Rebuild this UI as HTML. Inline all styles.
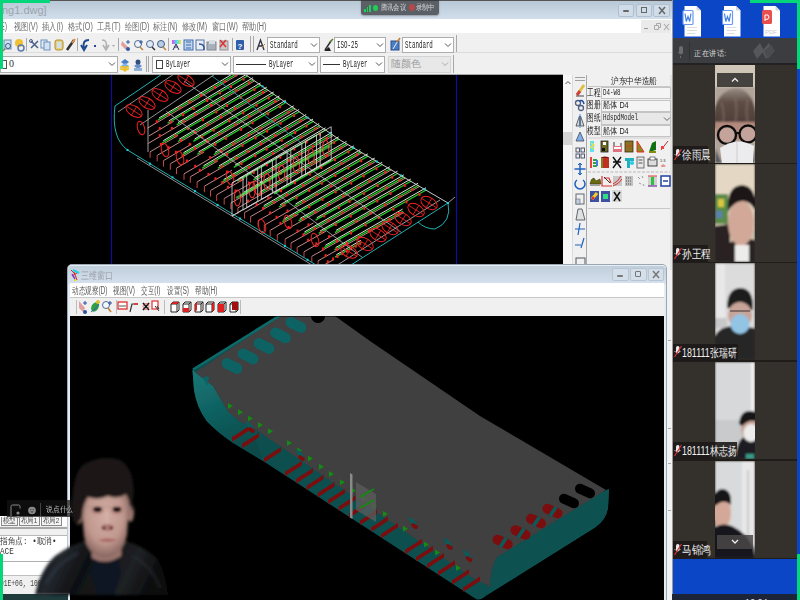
<!DOCTYPE html>
<html><head><meta charset="utf-8">
<style>
*{margin:0;padding:0;box-sizing:border-box}
html,body{width:800px;height:600px;overflow:hidden;background:#000;font-family:"Liberation Sans",sans-serif}
.a{position:absolute}
.t{position:absolute;white-space:nowrap;line-height:1}
</style></head><body>
<!-- CAD window -->
<div class="a" style="left:0;top:0;width:673px;height:20px;background:linear-gradient(#b9c8d6,#d3e0ec);border-top:1px solid #555"></div>
<div class="t" style="left:2px;top:5px;font-size:11px;color:#9aa3ad">ng1.dwg]</div>
<div class="a" style="left:0;top:19px;width:673px;height:14px;background:#fff"></div>
<div class="a" style="left:0;top:33px;width:673px;height:42px;background:#f0f0f0"></div>

<!-- menubar -->
<div class="t" style="left:0px;top:22px;font-size:10px;color:#6c6c6c;transform:scaleX(.72);transform-origin:0 0">E)</div>
<div class="t" style="left:14px;top:22px;font-size:10px;color:#6c6c6c;transform:scaleX(.72);transform-origin:0 0">视图(V)</div>
<div class="t" style="left:42px;top:22px;font-size:10px;color:#6c6c6c;transform:scaleX(.72);transform-origin:0 0">插入(I)</div>
<div class="t" style="left:68px;top:22px;font-size:10px;color:#6c6c6c;transform:scaleX(.72);transform-origin:0 0">格式(O)</div>
<div class="t" style="left:97px;top:22px;font-size:10px;color:#6c6c6c;transform:scaleX(.72);transform-origin:0 0">工具(T)</div>
<div class="t" style="left:125px;top:22px;font-size:10px;color:#6c6c6c;transform:scaleX(.72);transform-origin:0 0">绘图(D)</div>
<div class="t" style="left:153px;top:22px;font-size:10px;color:#6c6c6c;transform:scaleX(.72);transform-origin:0 0">标注(N)</div>
<div class="t" style="left:182px;top:22px;font-size:10px;color:#6c6c6c;transform:scaleX(.72);transform-origin:0 0">修改(M)</div>
<div class="t" style="left:212px;top:22px;font-size:10px;color:#6c6c6c;transform:scaleX(.72);transform-origin:0 0">窗口(W)</div>
<div class="t" style="left:242px;top:22px;font-size:10px;color:#6c6c6c;transform:scaleX(.72);transform-origin:0 0">帮助(H)</div>
<div class="a" style="left:641px;top:20px;width:10px;height:13px;background:#eaeaea"></div>
<div class="a" style="left:651px;top:20px;width:10px;height:13px;background:#eaeaea"></div>
<div class="a" style="left:661px;top:20px;width:10px;height:13px;background:#eaeaea"></div>
<div class="a" style="left:644px;top:28px;width:4px;height:1px;background:#999"></div>
<svg class="a" style="left:653px;top:22px" width="8" height="9"><path d="M1.5 3.5 h4 v4 h-4z M3.5 3.5 v-2 h4 v4 h-2" stroke="#aaa" fill="none"/></svg>
<svg class="a" style="left:663px;top:23px" width="7" height="8"><path d="M1 1 L6 7 M6 1 L1 7" stroke="#aaa" stroke-width="1.1"/></svg>
<!-- window buttons -->
<div class="a" style="left:618px;top:4px;width:16px;height:13px;border:1px solid #b0c0d0;border-radius:2px;background:#d0dce8"></div>
<div class="a" style="left:636px;top:4px;width:16px;height:13px;border:1px solid #b0c0d0;border-radius:2px;background:#d0dce8"></div>
<div class="a" style="left:653px;top:4px;width:17px;height:13px;border:1px solid #b0c0d0;border-radius:2px;background:#d0dce8"></div>
<div class="a" style="left:623px;top:10px;width:6px;height:2px;background:#666;border-radius:1px"></div>
<div class="a" style="left:641px;top:7px;width:6px;height:6px;border:1px solid #666"></div>
<svg class="a" style="left:658px;top:6px" width="8" height="9"><path d="M1 1 L7 8 M7 1 L1 8" stroke="#6a6a6a" stroke-width="1.6"/></svg>
<!-- toolbar1 -->
<div class="a" style="left:0;top:52px;width:673px;height:1px;background:#dcdcdc"></div>
<div class="a" style="left:0;top:74px;width:563px;height:1px;background:#a8a8a8"></div>
<svg class="a" style="left:0;top:33px" width="460" height="42" viewBox="0 33 460 42">
<g stroke="#a8a8a8" stroke-width="1">
<line x1="26.5" y1="38" x2="26.5" y2="51"/><line x1="77.5" y1="38" x2="77.5" y2="51"/><line x1="118.5" y1="38" x2="118.5" y2="51"/>
<line x1="168.5" y1="38" x2="168.5" y2="51"/><line x1="232.5" y1="38" x2="232.5" y2="51"/><line x1="250.5" y1="36" x2="250.5" y2="52"/><line x1="253.5" y1="36" x2="253.5" y2="52"/>
<line x1="146.5" y1="56" x2="146.5" y2="72"/><line x1="148.5" y1="56" x2="148.5" y2="72"/>
<line x1="456.5" y1="35" x2="456.5" y2="52"/><line x1="453.5" y1="55" x2="453.5" y2="73"/>
</g>
<!-- icons row 1 -->
<rect x="4" y="40" width="7" height="9" fill="#cfe0f0" stroke="#6f8db0"/><circle cx="8" cy="46" r="2.5" fill="none" stroke="#3a5f8a"/><line x1="5" y1="49" x2="3" y2="51" stroke="#b07040" stroke-width="1.5"/>
<circle cx="19" cy="43" r="4" fill="#f0c030"/><circle cx="21" cy="48" r="3" fill="none" stroke="#5a78b0" stroke-width="1.5"/>
<path d="M31 41 L38 48 M31 48 L38 41" stroke="#4a5f8a" stroke-width="1.5"/><circle cx="31" cy="41" r="1.5" fill="none" stroke="#4a5f8a"/>
<rect x="41" y="40" width="6" height="8" fill="#e0ecf8" stroke="#7090b8"/><rect x="44" y="42" width="6" height="8" fill="#d0e2f4" stroke="#7090b8"/>
<rect x="55" y="40" width="8" height="10" rx="2" fill="#e8d080" stroke="#b09030"/><rect x="57" y="42" width="4" height="6" fill="#cfe0f0"/>
<path d="M67 50 L74 40" stroke="#303030" stroke-width="2.5"/><path d="M72 43 L75 39" stroke="#e09040" stroke-width="2"/>
<path d="M89 40 Q82 40 84 48 M81 45 L84 50 L87 45" stroke="#1f4a8f" stroke-width="2" fill="none"/>
<rect x="94" y="45" width="2" height="2" fill="#3040a0"/>
<path d="M102 40 Q108 40 106 48 M103 45 L106 50 L109 45" stroke="#b0b0b0" stroke-width="1.5" fill="none"/>
<path d="M112 45 L115 45 L113.5 47 Z" fill="#aaa"/>
<path d="M122 41 L128 47 L126 50 L121 45 Z" fill="#e0a0a0"/><circle cx="128" cy="49" r="2" fill="#2f5aa0"/><path d="M128 40 L128 44 M126 42 L130 42" stroke="#2f5aa0"/>
<circle cx="138" cy="44" r="3.5" fill="#f0f4fa" stroke="#506a90"/><line x1="140" y1="47" x2="143" y2="50" stroke="#c08030" stroke-width="1.5"/><path d="M141 40 L141 44 M139 42 L143 42" stroke="#2f5aa0"/>
<circle cx="150" cy="44" r="3.5" fill="#dde8f4" stroke="#506a90"/><line x1="152" y1="47" x2="155" y2="50" stroke="#303030" stroke-width="1.5"/>
<circle cx="161" cy="44" r="3.5" fill="#b8cde6" stroke="#405a80"/><line x1="163" y1="47" x2="166" y2="50" stroke="#c08030" stroke-width="1.5"/>
<rect x="172" y="40" width="9" height="4" fill="url(#rb)"/><path d="M173 50 L176 44 L179 50 M174 47 L178 47" stroke="#303060" fill="none"/>
<defs><linearGradient id="rb"><stop offset="0" stop-color="#f040f0"/><stop offset=".5" stop-color="#40e0f0"/><stop offset="1" stop-color="#f0e040"/></linearGradient></defs>
<rect x="184" y="40" width="9" height="10" fill="#c0d4ec" stroke="#3a6ab0"/><path d="M186 42 h5 M186 45 h5 M186 48 h5" stroke="#3a6ab0"/>
<rect x="196" y="40" width="8" height="10" fill="#e8eef8" stroke="#5070a0"/><path d="M199 44 Q205 44 204 50" stroke="#2f4f8f" stroke-width="1.5" fill="none"/>
<rect x="207" y="42" width="9" height="8" fill="#a8b0bc" stroke="#808890"/><rect x="209" y="40" width="6" height="4" fill="#d8dde4"/>
<rect x="220" y="41" width="8" height="9" fill="#c8c8c8" stroke="#909090"/><path d="M220 40 L226 47 M226 40 L220 47" stroke="#e03030" stroke-width="1.5"/>
<rect x="236" y="40" width="8" height="10" rx="1" fill="#2f5fa8"/><text x="237.5" y="48.5" font-size="8" fill="#fff" font-family="Liberation Sans" font-weight="bold">?</text>
<path d="M257 50 L260.5 40 L264 50 M258.5 46 L262.5 46" stroke="#303040" stroke-width="1.3" fill="none"/><path d="M262 47 L265 44" stroke="#c08030"/>
<path d="M325 50 L331 41" stroke="#303030" stroke-width="1.5"/><path d="M324 51 L329 47 L331 51 Z" fill="#202020"/><path d="M330 42 L333 39" stroke="#508030" stroke-width="1.5"/>
<rect x="391" y="41" width="8" height="9" fill="#4a7fc8" stroke="#2a4f88"/><path d="M393 49 L399 39" stroke="#f0f0f0" stroke-width="1"/><path d="M397 42 L400 38" stroke="#c08030" stroke-width="1.5"/>
<!-- row 2 icons -->
<path d="M121 62 L125 59 L129 62 L125 65 Z" fill="#4a7fc8"/><path d="M121 66 L125 63 L129 66 L125 69 Z" fill="#80b0e0"/><path d="M121 69 L129 69 L125 72Z" fill="#f0c020"/><rect x="120" y="66" width="9" height="4" fill="#f0c020" opacity=".8"/>
<path d="M134 66 L138 63 L142 66 L138 69 Z" fill="#6a8fc8"/><circle cx="138" cy="62" r="2.5" fill="#304f80"/><rect x="134" y="68" width="8" height="3" fill="#90b0d8"/>
</svg>
<!-- combos -->
<div class="a" style="left:0;top:56px;width:118px;height:17px;background:#fff;border:1px solid #adadad"></div>
<div class="a" style="left:1px;top:60px;width:6px;height:9px;border:1px solid #555"></div>
<div class="t" style="left:9px;top:59px;font-size:10px;color:#333;font-family:'Liberation Serif',serif">0</div>
<svg class="a" style="left:108px;top:61px" width="8" height="6"><path d="M1 1.5 L4 4.5 L7 1.5" stroke="#555" stroke-width="1" fill="none"/></svg>
<div class="a" style="left:152px;top:56px;width:79px;height:17px;background:#fff;border:1px solid #adadad"></div>
<div class="a" style="left:156px;top:60px;width:7px;height:9px;border:1px solid #444"></div>
<div class="t" style="left:166px;top:60px;font-size:10px;color:#222;font-family:'Liberation Mono',monospace;transform:scaleX(.58);transform-origin:0 0">ByLayer</div>
<svg class="a" style="left:221px;top:61px" width="8" height="6"><path d="M1 1.5 L4 4.5 L7 1.5" stroke="#555" stroke-width="1" fill="none"/></svg>
<div class="a" style="left:233px;top:56px;width:85px;height:17px;background:#fff;border:1px solid #adadad"></div>
<div class="a" style="left:236px;top:64px;width:30px;height:1px;background:#333"></div>
<div class="t" style="left:269px;top:60px;font-size:10px;color:#222;font-family:'Liberation Mono',monospace;transform:scaleX(.58);transform-origin:0 0">ByLayer</div>
<svg class="a" style="left:308px;top:61px" width="8" height="6"><path d="M1 1.5 L4 4.5 L7 1.5" stroke="#555" stroke-width="1" fill="none"/></svg>
<div class="a" style="left:320px;top:56px;width:65px;height:17px;background:#fff;border:1px solid #adadad"></div>
<div class="a" style="left:323px;top:64px;width:17px;height:1px;background:#333"></div>
<div class="t" style="left:343px;top:60px;font-size:10px;color:#222;font-family:'Liberation Mono',monospace;transform:scaleX(.58);transform-origin:0 0">ByLayer</div>
<svg class="a" style="left:375px;top:61px" width="8" height="6"><path d="M1 1.5 L4 4.5 L7 1.5" stroke="#555" stroke-width="1" fill="none"/></svg>
<div class="a" style="left:388px;top:56px;width:63px;height:17px;background:#e8e8e8;border:1px solid #d4d4d4"></div>
<div class="t" style="left:391px;top:59px;font-size:10px;color:#9a9a9a">随颜色</div>
<svg class="a" style="left:441px;top:61px" width="8" height="6"><path d="M1 1.5 L4 4.5 L7 1.5" stroke="#aaa" stroke-width="1" fill="none"/></svg>
<div class="a" style="left:267px;top:37px;width:53px;height:16px;background:#fff;border:1px solid #adadad"></div>
<div class="t" style="left:270px;top:41px;font-size:10px;color:#222;font-family:'Liberation Mono',monospace;transform:scaleX(.58);transform-origin:0 0">Standard</div>
<svg class="a" style="left:310px;top:42px" width="8" height="6"><path d="M1 1.5 L4 4.5 L7 1.5" stroke="#555" stroke-width="1" fill="none"/></svg>
<div class="a" style="left:334px;top:37px;width:52px;height:16px;background:#fff;border:1px solid #adadad"></div>
<div class="t" style="left:337px;top:41px;font-size:10px;color:#222;font-family:'Liberation Mono',monospace;transform:scaleX(.58);transform-origin:0 0">ISO-25</div>
<svg class="a" style="left:376px;top:42px" width="8" height="6"><path d="M1 1.5 L4 4.5 L7 1.5" stroke="#555" stroke-width="1" fill="none"/></svg>
<div class="a" style="left:402px;top:37px;width:52px;height:16px;background:#fff;border:1px solid #adadad"></div>
<div class="t" style="left:405px;top:41px;font-size:10px;color:#222;font-family:'Liberation Mono',monospace;transform:scaleX(.58);transform-origin:0 0">Standard</div>
<svg class="a" style="left:444px;top:42px" width="8" height="6"><path d="M1 1.5 L4 4.5 L7 1.5" stroke="#555" stroke-width="1" fill="none"/></svg>
<!-- tencent overlay -->
<div class="a" style="left:361px;top:0;width:78px;height:15px;background:#5b5f66;border-radius:0 0 3px 3px;box-shadow:0 1px 2px rgba(0,0,0,.3)"></div>
<div class="a" style="left:361px;top:0;width:78px;height:1px;background:#3a3c40"></div>
<div class="a" style="left:364px;top:9px;width:1.5px;height:3px;background:#1fcf5a"></div>
<div class="a" style="left:366.5px;top:7px;width:1.5px;height:5px;background:#1fcf5a"></div>
<div class="a" style="left:369px;top:5px;width:1.5px;height:7px;background:#1fcf5a"></div>
<div class="a" style="left:373px;top:5px;width:5px;height:6px;background:#1fcf5a;border-radius:50%"></div>
<div class="t" style="left:381px;top:3.5px;font-size:8px;color:#d8d8d8;transform:scaleX(.78);transform-origin:0 0">腾讯会议</div>
<div class="a" style="left:409px;top:4px;width:6px;height:7px;background:#b84848;border-radius:50%"></div>
<div class="t" style="left:416px;top:3.5px;font-size:8px;color:#d8d8d8;transform:scaleX(.78);transform-origin:0 0">录制中</div>
<!-- drawing area -->
<div class="a" style="left:0;top:75px;width:564px;height:525px;background:#000"></div>
<!--WFSTART--><svg class="a" style="left:0;top:74px" width="564" height="192" viewBox="0 74 564 192">
<defs><clipPath id="wfc"><rect x="0" y="75" width="563" height="190"/></clipPath><filter id="wb"><feGaussianBlur stdDeviation="0.35"/></filter></defs>
<g clip-path="url(#wfc)" filter="url(#wb)">
<path d="M111.5 75 V265 M456.5 75 V265" stroke="#1010a0" stroke-width="1.2"/>
<line x1="147.6" y1="128.1" x2="242.2" y2="72.2" stroke="#f0a8a8" stroke-width="0.9" opacity="0.9"/>
<line x1="157.8" y1="120.3" x2="241.2" y2="71.0" stroke="#22cc22" stroke-width="1.3" opacity="1"/>
<line x1="159.0" y1="118.0" x2="240.7" y2="69.0" stroke="#e4f8e4" stroke-width="1.0" opacity="0.95"/>
<rect x="155.7" y="120.2" width="2" height="3" fill="#f02020"/>
<rect x="167.7" y="113.1" width="2" height="3" fill="#f02020"/>
<rect x="179.1" y="106.4" width="2" height="3" fill="#f02020"/>
<rect x="188.9" y="100.6" width="2" height="3" fill="#f02020"/>
<rect x="200.1" y="94.0" width="2" height="3" fill="#f02020"/>
<rect x="213.8" y="85.9" width="2" height="3" fill="#f02020"/>
<rect x="223.5" y="80.2" width="2" height="3" fill="#f02020"/>
<rect x="234.8" y="73.5" width="2" height="3" fill="#f02020"/>
<line x1="148.8" y1="136.0" x2="173.8" y2="121.2" stroke="#f0a8a8" stroke-width="0.9" opacity="0.9"/>
<line x1="167.6" y1="123.2" x2="247.9" y2="75.8" stroke="#22cc22" stroke-width="1.3" opacity="1"/>
<line x1="168.8" y1="120.9" x2="247.4" y2="73.8" stroke="#e4f8e4" stroke-width="1.0" opacity="0.95"/>
<rect x="158.8" y="127.0" width="2" height="3" fill="#f02020"/>
<rect x="169.7" y="120.5" width="2" height="3" fill="#f02020"/>
<rect x="182.2" y="113.2" width="2" height="3" fill="#f02020"/>
<rect x="192.8" y="107.0" width="2" height="3" fill="#f02020"/>
<rect x="206.3" y="99.0" width="2" height="3" fill="#f02020"/>
<rect x="219.0" y="91.5" width="2" height="3" fill="#f02020"/>
<rect x="230.0" y="85.1" width="2" height="3" fill="#f02020"/>
<rect x="242.6" y="77.6" width="2" height="3" fill="#f02020"/>
<line x1="148.3" y1="143.4" x2="254.5" y2="80.9" stroke="#f0a8a8" stroke-width="0.9" opacity="0.9"/>
<line x1="176.7" y1="124.9" x2="253.5" y2="79.7" stroke="#22cc22" stroke-width="1.3" opacity="1"/>
<line x1="177.9" y1="122.6" x2="253.0" y2="77.7" stroke="#e4f8e4" stroke-width="1.0" opacity="0.95"/>
<rect x="158.7" y="134.1" width="2" height="3" fill="#f02020"/>
<rect x="170.9" y="126.9" width="2" height="3" fill="#f02020"/>
<rect x="182.8" y="120.0" width="2" height="3" fill="#f02020"/>
<rect x="194.6" y="113.0" width="2" height="3" fill="#f02020"/>
<rect x="210.1" y="103.9" width="2" height="3" fill="#f02020"/>
<rect x="221.6" y="97.2" width="2" height="3" fill="#f02020"/>
<rect x="235.1" y="89.2" width="2" height="3" fill="#f02020"/>
<rect x="248.3" y="81.4" width="2" height="3" fill="#f02020"/>
<line x1="150.1" y1="151.8" x2="178.1" y2="135.4" stroke="#f0a8a8" stroke-width="0.9" opacity="0.9"/>
<line x1="162.1" y1="143.0" x2="261.0" y2="84.9" stroke="#22cc22" stroke-width="1.3" opacity="1"/>
<line x1="163.3" y1="140.7" x2="260.5" y2="82.9" stroke="#e4f8e4" stroke-width="1.0" opacity="0.95"/>
<line x1="150.1" y1="151.8" x2="150.1" y2="157.8" stroke="#e05050" stroke-width="0.9" opacity="1"/>
<rect x="159.9" y="142.9" width="2" height="3" fill="#f02020"/>
<rect x="174.7" y="134.3" width="2" height="3" fill="#f02020"/>
<rect x="187.0" y="127.1" width="2" height="3" fill="#f02020"/>
<rect x="202.0" y="118.2" width="2" height="3" fill="#f02020"/>
<rect x="215.3" y="110.4" width="2" height="3" fill="#f02020"/>
<rect x="226.1" y="104.1" width="2" height="3" fill="#f02020"/>
<rect x="239.7" y="96.1" width="2" height="3" fill="#f02020"/>
<rect x="253.4" y="88.1" width="2" height="3" fill="#f02020"/>
<line x1="157.2" y1="155.4" x2="268.2" y2="90.4" stroke="#f0a8a8" stroke-width="0.9" opacity="0.9"/>
<line x1="178.0" y1="141.5" x2="267.2" y2="89.2" stroke="#22cc22" stroke-width="1.3" opacity="1"/>
<line x1="179.2" y1="139.2" x2="266.7" y2="87.2" stroke="#e4f8e4" stroke-width="1.0" opacity="0.95"/>
<line x1="157.2" y1="155.4" x2="157.2" y2="161.4" stroke="#e05050" stroke-width="0.9" opacity="1"/>
<rect x="167.7" y="146.2" width="2" height="3" fill="#f02020"/>
<rect x="180.0" y="139.0" width="2" height="3" fill="#f02020"/>
<rect x="194.0" y="130.8" width="2" height="3" fill="#f02020"/>
<rect x="206.9" y="123.2" width="2" height="3" fill="#f02020"/>
<rect x="220.1" y="115.5" width="2" height="3" fill="#f02020"/>
<rect x="234.2" y="107.2" width="2" height="3" fill="#f02020"/>
<rect x="247.5" y="99.4" width="2" height="3" fill="#f02020"/>
<rect x="261.9" y="91.0" width="2" height="3" fill="#f02020"/>
<line x1="163.5" y1="160.6" x2="191.4" y2="144.2" stroke="#f0a8a8" stroke-width="0.9" opacity="0.9"/>
<line x1="193.3" y1="141.4" x2="274.2" y2="94.0" stroke="#22cc22" stroke-width="1.3" opacity="1"/>
<line x1="194.5" y1="139.1" x2="273.7" y2="92.0" stroke="#e4f8e4" stroke-width="1.0" opacity="0.95"/>
<line x1="163.5" y1="160.6" x2="163.5" y2="166.6" stroke="#e05050" stroke-width="0.9" opacity="1"/>
<rect x="174.9" y="150.8" width="2" height="3" fill="#f02020"/>
<rect x="188.7" y="142.7" width="2" height="3" fill="#f02020"/>
<rect x="201.1" y="135.5" width="2" height="3" fill="#f02020"/>
<rect x="212.8" y="128.7" width="2" height="3" fill="#f02020"/>
<rect x="228.5" y="119.4" width="2" height="3" fill="#f02020"/>
<rect x="242.3" y="111.4" width="2" height="3" fill="#f02020"/>
<rect x="255.5" y="103.7" width="2" height="3" fill="#f02020"/>
<rect x="267.7" y="96.5" width="2" height="3" fill="#f02020"/>
<line x1="170.3" y1="163.8" x2="280.9" y2="99.1" stroke="#f0a8a8" stroke-width="0.9" opacity="0.9"/>
<line x1="182.2" y1="155.1" x2="279.9" y2="97.9" stroke="#22cc22" stroke-width="1.3" opacity="1"/>
<line x1="183.4" y1="152.8" x2="279.4" y2="95.9" stroke="#e4f8e4" stroke-width="1.0" opacity="0.95"/>
<line x1="170.3" y1="163.8" x2="170.3" y2="169.8" stroke="#e05050" stroke-width="0.9" opacity="1"/>
<rect x="181.5" y="154.2" width="2" height="3" fill="#f02020"/>
<rect x="193.9" y="146.9" width="2" height="3" fill="#f02020"/>
<rect x="206.2" y="139.7" width="2" height="3" fill="#f02020"/>
<rect x="218.7" y="132.4" width="2" height="3" fill="#f02020"/>
<rect x="234.6" y="123.1" width="2" height="3" fill="#f02020"/>
<rect x="248.4" y="115.1" width="2" height="3" fill="#f02020"/>
<rect x="258.6" y="109.1" width="2" height="3" fill="#f02020"/>
<rect x="274.3" y="99.9" width="2" height="3" fill="#f02020"/>
<line x1="176.5" y1="168.1" x2="204.2" y2="151.9" stroke="#f0a8a8" stroke-width="0.9" opacity="0.9"/>
<line x1="197.3" y1="154.3" x2="286.2" y2="102.3" stroke="#22cc22" stroke-width="1.3" opacity="1"/>
<line x1="198.5" y1="152.0" x2="285.7" y2="100.3" stroke="#e4f8e4" stroke-width="1.0" opacity="0.95"/>
<line x1="176.5" y1="168.1" x2="176.5" y2="174.1" stroke="#e05050" stroke-width="0.9" opacity="1"/>
<rect x="185.9" y="159.5" width="2" height="3" fill="#f02020"/>
<rect x="200.8" y="150.8" width="2" height="3" fill="#f02020"/>
<rect x="214.4" y="142.9" width="2" height="3" fill="#f02020"/>
<rect x="224.9" y="136.8" width="2" height="3" fill="#f02020"/>
<rect x="240.1" y="127.9" width="2" height="3" fill="#f02020"/>
<rect x="251.5" y="121.3" width="2" height="3" fill="#f02020"/>
<rect x="267.0" y="112.2" width="2" height="3" fill="#f02020"/>
<rect x="279.0" y="105.2" width="2" height="3" fill="#f02020"/>
<line x1="184.0" y1="173.8" x2="295.2" y2="109.0" stroke="#f0a8a8" stroke-width="0.9" opacity="0.9"/>
<line x1="213.7" y1="154.7" x2="294.2" y2="107.8" stroke="#22cc22" stroke-width="1.3" opacity="1"/>
<line x1="214.9" y1="152.4" x2="293.7" y2="105.8" stroke="#e4f8e4" stroke-width="1.0" opacity="0.95"/>
<line x1="184.0" y1="173.8" x2="184.0" y2="179.8" stroke="#e05050" stroke-width="0.9" opacity="1"/>
<rect x="194.2" y="164.8" width="2" height="3" fill="#f02020"/>
<rect x="209.1" y="156.1" width="2" height="3" fill="#f02020"/>
<rect x="220.2" y="149.6" width="2" height="3" fill="#f02020"/>
<rect x="232.8" y="142.3" width="2" height="3" fill="#f02020"/>
<rect x="247.8" y="133.5" width="2" height="3" fill="#f02020"/>
<rect x="259.3" y="126.9" width="2" height="3" fill="#f02020"/>
<rect x="273.2" y="118.8" width="2" height="3" fill="#f02020"/>
<rect x="287.2" y="110.6" width="2" height="3" fill="#f02020"/>
<line x1="190.3" y1="176.8" x2="217.9" y2="160.8" stroke="#f0a8a8" stroke-width="0.9" opacity="0.9"/>
<line x1="202.1" y1="168.2" x2="299.6" y2="111.5" stroke="#22cc22" stroke-width="1.3" opacity="1"/>
<line x1="203.3" y1="165.9" x2="299.1" y2="109.5" stroke="#e4f8e4" stroke-width="1.0" opacity="0.95"/>
<line x1="190.3" y1="176.8" x2="190.3" y2="182.8" stroke="#e05050" stroke-width="0.9" opacity="1"/>
<rect x="198.8" y="168.8" width="2" height="3" fill="#f02020"/>
<rect x="214.8" y="159.5" width="2" height="3" fill="#f02020"/>
<rect x="226.2" y="152.9" width="2" height="3" fill="#f02020"/>
<rect x="241.5" y="144.0" width="2" height="3" fill="#f02020"/>
<rect x="254.6" y="136.4" width="2" height="3" fill="#f02020"/>
<rect x="266.1" y="129.7" width="2" height="3" fill="#f02020"/>
<rect x="279.6" y="121.8" width="2" height="3" fill="#f02020"/>
<rect x="293.0" y="114.0" width="2" height="3" fill="#f02020"/>
<line x1="197.1" y1="181.9" x2="307.7" y2="117.7" stroke="#f0a8a8" stroke-width="0.9" opacity="0.9"/>
<line x1="217.8" y1="168.2" x2="306.7" y2="116.5" stroke="#22cc22" stroke-width="1.3" opacity="1"/>
<line x1="219.0" y1="165.9" x2="306.2" y2="114.5" stroke="#e4f8e4" stroke-width="1.0" opacity="0.95"/>
<line x1="197.1" y1="181.9" x2="197.1" y2="187.9" stroke="#e05050" stroke-width="0.9" opacity="1"/>
<rect x="207.4" y="172.9" width="2" height="3" fill="#f02020"/>
<rect x="220.8" y="165.1" width="2" height="3" fill="#f02020"/>
<rect x="235.2" y="156.7" width="2" height="3" fill="#f02020"/>
<rect x="247.0" y="149.9" width="2" height="3" fill="#f02020"/>
<rect x="260.0" y="142.3" width="2" height="3" fill="#f02020"/>
<rect x="274.3" y="134.0" width="2" height="3" fill="#f02020"/>
<rect x="285.9" y="127.3" width="2" height="3" fill="#f02020"/>
<rect x="299.4" y="119.4" width="2" height="3" fill="#f02020"/>
<line x1="204.4" y1="186.2" x2="231.9" y2="170.2" stroke="#f0a8a8" stroke-width="0.9" opacity="0.9"/>
<line x1="233.8" y1="167.4" x2="313.5" y2="121.1" stroke="#22cc22" stroke-width="1.3" opacity="1"/>
<line x1="235.0" y1="165.1" x2="313.0" y2="119.1" stroke="#e4f8e4" stroke-width="1.0" opacity="0.95"/>
<line x1="204.4" y1="186.2" x2="204.4" y2="192.2" stroke="#e05050" stroke-width="0.9" opacity="1"/>
<rect x="214.5" y="177.2" width="2" height="3" fill="#f02020"/>
<rect x="226.0" y="170.6" width="2" height="3" fill="#f02020"/>
<rect x="240.5" y="162.1" width="2" height="3" fill="#f02020"/>
<rect x="254.3" y="154.2" width="2" height="3" fill="#f02020"/>
<rect x="265.6" y="147.6" width="2" height="3" fill="#f02020"/>
<rect x="280.8" y="138.8" width="2" height="3" fill="#f02020"/>
<rect x="294.1" y="131.1" width="2" height="3" fill="#f02020"/>
<rect x="305.4" y="124.5" width="2" height="3" fill="#f02020"/>
<line x1="210.5" y1="190.5" x2="320.7" y2="126.7" stroke="#f0a8a8" stroke-width="0.9" opacity="0.9"/>
<line x1="222.4" y1="181.9" x2="319.7" y2="125.5" stroke="#22cc22" stroke-width="1.3" opacity="1"/>
<line x1="223.6" y1="179.6" x2="319.2" y2="123.5" stroke="#e4f8e4" stroke-width="1.0" opacity="0.95"/>
<line x1="210.5" y1="190.5" x2="210.5" y2="196.5" stroke="#e05050" stroke-width="0.9" opacity="1"/>
<rect x="221.2" y="181.2" width="2" height="3" fill="#f02020"/>
<rect x="233.3" y="174.2" width="2" height="3" fill="#f02020"/>
<rect x="247.7" y="165.9" width="2" height="3" fill="#f02020"/>
<rect x="261.0" y="158.2" width="2" height="3" fill="#f02020"/>
<rect x="271.9" y="151.9" width="2" height="3" fill="#f02020"/>
<rect x="285.2" y="144.2" width="2" height="3" fill="#f02020"/>
<rect x="300.5" y="135.3" width="2" height="3" fill="#f02020"/>
<rect x="314.7" y="127.1" width="2" height="3" fill="#f02020"/>
<line x1="216.7" y1="194.8" x2="244.3" y2="178.9" stroke="#f0a8a8" stroke-width="0.9" opacity="0.9"/>
<line x1="237.3" y1="181.1" x2="326.0" y2="129.8" stroke="#22cc22" stroke-width="1.3" opacity="1"/>
<line x1="238.5" y1="178.8" x2="325.5" y2="127.8" stroke="#e4f8e4" stroke-width="1.0" opacity="0.95"/>
<line x1="216.7" y1="194.8" x2="216.7" y2="200.8" stroke="#e05050" stroke-width="0.9" opacity="1"/>
<rect x="227.0" y="185.8" width="2" height="3" fill="#f02020"/>
<rect x="239.4" y="178.6" width="2" height="3" fill="#f02020"/>
<rect x="252.8" y="170.9" width="2" height="3" fill="#f02020"/>
<rect x="265.8" y="163.3" width="2" height="3" fill="#f02020"/>
<rect x="279.3" y="155.6" width="2" height="3" fill="#f02020"/>
<rect x="293.3" y="147.5" width="2" height="3" fill="#f02020"/>
<rect x="305.5" y="140.4" width="2" height="3" fill="#f02020"/>
<rect x="319.0" y="132.6" width="2" height="3" fill="#f02020"/>
<line x1="224.2" y1="198.5" x2="333.5" y2="135.5" stroke="#f0a8a8" stroke-width="0.9" opacity="0.9"/>
<line x1="253.4" y1="179.9" x2="332.5" y2="134.3" stroke="#22cc22" stroke-width="1.3" opacity="1"/>
<line x1="254.6" y1="177.6" x2="332.0" y2="132.3" stroke="#e4f8e4" stroke-width="1.0" opacity="0.95"/>
<line x1="224.2" y1="198.5" x2="224.2" y2="204.5" stroke="#e05050" stroke-width="0.9" opacity="1"/>
<rect x="234.4" y="189.6" width="2" height="3" fill="#f02020"/>
<rect x="248.0" y="181.7" width="2" height="3" fill="#f02020"/>
<rect x="259.8" y="174.9" width="2" height="3" fill="#f02020"/>
<rect x="272.6" y="167.5" width="2" height="3" fill="#f02020"/>
<rect x="287.6" y="158.9" width="2" height="3" fill="#f02020"/>
<rect x="298.9" y="152.4" width="2" height="3" fill="#f02020"/>
<rect x="311.8" y="144.9" width="2" height="3" fill="#f02020"/>
<rect x="325.7" y="136.9" width="2" height="3" fill="#f02020"/>
<line x1="230.9" y1="203.0" x2="258.2" y2="187.3" stroke="#f0a8a8" stroke-width="0.9" opacity="0.9"/>
<line x1="242.6" y1="194.5" x2="339.1" y2="138.9" stroke="#22cc22" stroke-width="1.3" opacity="1"/>
<line x1="243.8" y1="192.2" x2="338.6" y2="136.9" stroke="#e4f8e4" stroke-width="1.0" opacity="0.95"/>
<line x1="230.9" y1="203.0" x2="230.9" y2="209.0" stroke="#e05050" stroke-width="0.9" opacity="1"/>
<rect x="240.2" y="194.5" width="2" height="3" fill="#f02020"/>
<rect x="253.4" y="187.0" width="2" height="3" fill="#f02020"/>
<rect x="268.1" y="178.5" width="2" height="3" fill="#f02020"/>
<rect x="279.9" y="171.7" width="2" height="3" fill="#f02020"/>
<rect x="294.4" y="163.3" width="2" height="3" fill="#f02020"/>
<rect x="305.3" y="157.1" width="2" height="3" fill="#f02020"/>
<rect x="318.9" y="149.2" width="2" height="3" fill="#f02020"/>
<rect x="333.1" y="141.1" width="2" height="3" fill="#f02020"/>
<line x1="237.9" y1="207.9" x2="348.0" y2="144.6" stroke="#f0a8a8" stroke-width="0.9" opacity="0.9"/>
<line x1="258.5" y1="194.3" x2="347.0" y2="143.4" stroke="#22cc22" stroke-width="1.3" opacity="1"/>
<line x1="259.7" y1="192.0" x2="346.5" y2="141.4" stroke="#e4f8e4" stroke-width="1.0" opacity="0.95"/>
<line x1="237.9" y1="207.9" x2="237.9" y2="213.9" stroke="#e05050" stroke-width="0.9" opacity="1"/>
<rect x="247.0" y="199.6" width="2" height="3" fill="#f02020"/>
<rect x="259.9" y="192.2" width="2" height="3" fill="#f02020"/>
<rect x="274.4" y="183.9" width="2" height="3" fill="#f02020"/>
<rect x="286.5" y="176.9" width="2" height="3" fill="#f02020"/>
<rect x="301.7" y="168.1" width="2" height="3" fill="#f02020"/>
<rect x="315.1" y="160.5" width="2" height="3" fill="#f02020"/>
<rect x="326.1" y="154.1" width="2" height="3" fill="#f02020"/>
<rect x="339.6" y="146.4" width="2" height="3" fill="#f02020"/>
<line x1="244.5" y1="212.6" x2="272.2" y2="196.7" stroke="#f0a8a8" stroke-width="0.9" opacity="0.9"/>
<line x1="274.1" y1="193.9" x2="354.4" y2="147.8" stroke="#22cc22" stroke-width="1.3" opacity="1"/>
<line x1="275.3" y1="191.6" x2="353.9" y2="145.8" stroke="#e4f8e4" stroke-width="1.0" opacity="0.95"/>
<line x1="244.5" y1="212.6" x2="244.5" y2="218.6" stroke="#e05050" stroke-width="0.9" opacity="1"/>
<rect x="255.6" y="203.2" width="2" height="3" fill="#f02020"/>
<rect x="267.4" y="196.4" width="2" height="3" fill="#f02020"/>
<rect x="280.0" y="189.2" width="2" height="3" fill="#f02020"/>
<rect x="293.8" y="181.2" width="2" height="3" fill="#f02020"/>
<rect x="308.8" y="172.6" width="2" height="3" fill="#f02020"/>
<rect x="320.3" y="166.0" width="2" height="3" fill="#f02020"/>
<rect x="333.9" y="158.2" width="2" height="3" fill="#f02020"/>
<rect x="347.4" y="150.4" width="2" height="3" fill="#f02020"/>
<line x1="250.6" y1="216.6" x2="361.9" y2="152.8" stroke="#f0a8a8" stroke-width="0.9" opacity="0.9"/>
<line x1="262.5" y1="208.0" x2="360.9" y2="151.6" stroke="#22cc22" stroke-width="1.3" opacity="1"/>
<line x1="263.7" y1="205.7" x2="360.4" y2="149.6" stroke="#e4f8e4" stroke-width="1.0" opacity="0.95"/>
<line x1="250.6" y1="216.6" x2="250.6" y2="222.6" stroke="#e05050" stroke-width="0.9" opacity="1"/>
<rect x="262.2" y="206.9" width="2" height="3" fill="#f02020"/>
<rect x="273.0" y="200.7" width="2" height="3" fill="#f02020"/>
<rect x="285.8" y="193.4" width="2" height="3" fill="#f02020"/>
<rect x="302.3" y="183.9" width="2" height="3" fill="#f02020"/>
<rect x="315.5" y="176.4" width="2" height="3" fill="#f02020"/>
<rect x="329.2" y="168.5" width="2" height="3" fill="#f02020"/>
<rect x="340.7" y="161.9" width="2" height="3" fill="#f02020"/>
<rect x="355.8" y="153.3" width="2" height="3" fill="#f02020"/>
<line x1="258.2" y1="220.7" x2="285.9" y2="204.8" stroke="#f0a8a8" stroke-width="0.9" opacity="0.9"/>
<line x1="279.0" y1="207.0" x2="368.3" y2="155.9" stroke="#22cc22" stroke-width="1.3" opacity="1"/>
<line x1="280.2" y1="204.7" x2="367.8" y2="153.9" stroke="#e4f8e4" stroke-width="1.0" opacity="0.95"/>
<line x1="258.2" y1="220.7" x2="258.2" y2="226.7" stroke="#e05050" stroke-width="0.9" opacity="1"/>
<rect x="269.1" y="211.4" width="2" height="3" fill="#f02020"/>
<rect x="282.7" y="203.6" width="2" height="3" fill="#f02020"/>
<rect x="295.5" y="196.3" width="2" height="3" fill="#f02020"/>
<rect x="308.3" y="188.9" width="2" height="3" fill="#f02020"/>
<rect x="320.9" y="181.7" width="2" height="3" fill="#f02020"/>
<rect x="334.4" y="174.0" width="2" height="3" fill="#f02020"/>
<rect x="347.4" y="166.6" width="2" height="3" fill="#f02020"/>
<rect x="360.2" y="159.2" width="2" height="3" fill="#f02020"/>
<line x1="264.3" y1="225.2" x2="376.3" y2="161.2" stroke="#f0a8a8" stroke-width="0.9" opacity="0.9"/>
<line x1="294.3" y1="206.3" x2="375.3" y2="160.0" stroke="#22cc22" stroke-width="1.3" opacity="1"/>
<line x1="295.5" y1="204.0" x2="374.8" y2="158.0" stroke="#e4f8e4" stroke-width="1.0" opacity="0.95"/>
<line x1="264.3" y1="225.2" x2="264.3" y2="231.2" stroke="#e05050" stroke-width="0.9" opacity="1"/>
<rect x="275.6" y="215.7" width="2" height="3" fill="#f02020"/>
<rect x="286.5" y="209.5" width="2" height="3" fill="#f02020"/>
<rect x="302.8" y="200.1" width="2" height="3" fill="#f02020"/>
<rect x="315.5" y="192.9" width="2" height="3" fill="#f02020"/>
<rect x="329.7" y="184.7" width="2" height="3" fill="#f02020"/>
<rect x="343.1" y="177.1" width="2" height="3" fill="#f02020"/>
<rect x="356.5" y="169.4" width="2" height="3" fill="#f02020"/>
<rect x="368.9" y="162.4" width="2" height="3" fill="#f02020"/>
<line x1="270.2" y1="230.3" x2="298.6" y2="214.1" stroke="#f0a8a8" stroke-width="0.9" opacity="0.9"/>
<line x1="282.3" y1="221.6" x2="382.7" y2="164.3" stroke="#22cc22" stroke-width="1.3" opacity="1"/>
<line x1="283.5" y1="219.3" x2="382.2" y2="162.3" stroke="#e4f8e4" stroke-width="1.0" opacity="0.95"/>
<line x1="270.2" y1="230.3" x2="270.2" y2="236.3" stroke="#e05050" stroke-width="0.9" opacity="1"/>
<rect x="279.4" y="221.9" width="2" height="3" fill="#f02020"/>
<rect x="293.5" y="213.9" width="2" height="3" fill="#f02020"/>
<rect x="308.3" y="205.4" width="2" height="3" fill="#f02020"/>
<rect x="321.5" y="197.9" width="2" height="3" fill="#f02020"/>
<rect x="334.7" y="190.4" width="2" height="3" fill="#f02020"/>
<rect x="350.2" y="181.6" width="2" height="3" fill="#f02020"/>
<rect x="362.7" y="174.4" width="2" height="3" fill="#f02020"/>
<rect x="375.4" y="167.2" width="2" height="3" fill="#f02020"/>
<line x1="277.3" y1="234.8" x2="391.3" y2="169.9" stroke="#f0a8a8" stroke-width="0.9" opacity="0.9"/>
<line x1="298.6" y1="220.9" x2="390.3" y2="168.7" stroke="#22cc22" stroke-width="1.3" opacity="1"/>
<line x1="299.8" y1="218.6" x2="389.8" y2="166.7" stroke="#e4f8e4" stroke-width="1.0" opacity="0.95"/>
<line x1="277.3" y1="234.8" x2="277.3" y2="240.8" stroke="#e05050" stroke-width="0.9" opacity="1"/>
<rect x="287.6" y="225.9" width="2" height="3" fill="#f02020"/>
<rect x="302.3" y="217.5" width="2" height="3" fill="#f02020"/>
<rect x="314.5" y="210.6" width="2" height="3" fill="#f02020"/>
<rect x="327.7" y="203.1" width="2" height="3" fill="#f02020"/>
<rect x="342.5" y="194.6" width="2" height="3" fill="#f02020"/>
<rect x="357.2" y="186.3" width="2" height="3" fill="#f02020"/>
<rect x="368.6" y="179.7" width="2" height="3" fill="#f02020"/>
<rect x="384.4" y="170.7" width="2" height="3" fill="#f02020"/>
<line x1="285.1" y1="239.1" x2="313.5" y2="222.9" stroke="#f0a8a8" stroke-width="0.9" opacity="0.9"/>
<line x1="315.5" y1="220.1" x2="398.0" y2="173.2" stroke="#22cc22" stroke-width="1.3" opacity="1"/>
<line x1="316.7" y1="217.8" x2="397.5" y2="171.2" stroke="#e4f8e4" stroke-width="1.0" opacity="0.95"/>
<line x1="285.1" y1="239.1" x2="285.1" y2="245.1" stroke="#e05050" stroke-width="0.9" opacity="1"/>
<rect x="296.6" y="229.5" width="2" height="3" fill="#f02020"/>
<rect x="307.4" y="223.3" width="2" height="3" fill="#f02020"/>
<rect x="323.2" y="214.4" width="2" height="3" fill="#f02020"/>
<rect x="337.7" y="206.1" width="2" height="3" fill="#f02020"/>
<rect x="348.6" y="199.9" width="2" height="3" fill="#f02020"/>
<rect x="363.0" y="191.8" width="2" height="3" fill="#f02020"/>
<rect x="376.7" y="184.0" width="2" height="3" fill="#f02020"/>
<rect x="391.2" y="175.7" width="2" height="3" fill="#f02020"/>
<line x1="291.0" y1="243.0" x2="405.3" y2="178.1" stroke="#f0a8a8" stroke-width="0.9" opacity="0.9"/>
<line x1="303.2" y1="234.3" x2="404.3" y2="176.9" stroke="#22cc22" stroke-width="1.3" opacity="1"/>
<line x1="304.4" y1="232.0" x2="403.8" y2="174.9" stroke="#e4f8e4" stroke-width="1.0" opacity="0.95"/>
<line x1="291.0" y1="243.0" x2="291.0" y2="249.0" stroke="#e05050" stroke-width="0.9" opacity="1"/>
<rect x="302.4" y="233.4" width="2" height="3" fill="#f02020"/>
<rect x="313.5" y="227.2" width="2" height="3" fill="#f02020"/>
<rect x="327.3" y="219.3" width="2" height="3" fill="#f02020"/>
<rect x="341.3" y="211.3" width="2" height="3" fill="#f02020"/>
<rect x="355.0" y="203.6" width="2" height="3" fill="#f02020"/>
<rect x="368.5" y="195.9" width="2" height="3" fill="#f02020"/>
<rect x="385.4" y="186.3" width="2" height="3" fill="#f02020"/>
<rect x="398.7" y="178.8" width="2" height="3" fill="#f02020"/>
<line x1="297.2" y1="247.4" x2="326.0" y2="231.1" stroke="#f0a8a8" stroke-width="0.9" opacity="0.9"/>
<line x1="318.7" y1="233.4" x2="411.3" y2="181.0" stroke="#22cc22" stroke-width="1.3" opacity="1"/>
<line x1="319.9" y1="231.1" x2="410.8" y2="179.0" stroke="#e4f8e4" stroke-width="1.0" opacity="0.95"/>
<line x1="297.2" y1="247.4" x2="297.2" y2="253.4" stroke="#e05050" stroke-width="0.9" opacity="1"/>
<rect x="307.1" y="238.7" width="2" height="3" fill="#f02020"/>
<rect x="320.9" y="230.9" width="2" height="3" fill="#f02020"/>
<rect x="334.8" y="223.0" width="2" height="3" fill="#f02020"/>
<rect x="349.7" y="214.6" width="2" height="3" fill="#f02020"/>
<rect x="363.3" y="206.9" width="2" height="3" fill="#f02020"/>
<rect x="376.3" y="199.5" width="2" height="3" fill="#f02020"/>
<rect x="389.5" y="192.0" width="2" height="3" fill="#f02020"/>
<rect x="403.8" y="183.9" width="2" height="3" fill="#f02020"/>
<line x1="304.0" y1="251.8" x2="419.6" y2="186.4" stroke="#f0a8a8" stroke-width="0.9" opacity="0.9"/>
<line x1="334.9" y1="232.6" x2="418.6" y2="185.2" stroke="#22cc22" stroke-width="1.3" opacity="1"/>
<line x1="336.1" y1="230.3" x2="418.1" y2="183.2" stroke="#e4f8e4" stroke-width="1.0" opacity="0.95"/>
<line x1="304.0" y1="251.8" x2="304.0" y2="257.8" stroke="#e05050" stroke-width="0.9" opacity="1"/>
<rect x="315.3" y="242.4" width="2" height="3" fill="#f02020"/>
<rect x="328.0" y="235.2" width="2" height="3" fill="#f02020"/>
<rect x="340.9" y="227.9" width="2" height="3" fill="#f02020"/>
<rect x="355.1" y="219.9" width="2" height="3" fill="#f02020"/>
<rect x="369.6" y="211.7" width="2" height="3" fill="#f02020"/>
<rect x="384.3" y="203.4" width="2" height="3" fill="#f02020"/>
<rect x="398.8" y="195.2" width="2" height="3" fill="#f02020"/>
<rect x="411.3" y="188.1" width="2" height="3" fill="#f02020"/>
<line x1="311.8" y1="256.3" x2="340.7" y2="240.0" stroke="#f0a8a8" stroke-width="0.9" opacity="0.9"/>
<line x1="324.2" y1="247.6" x2="426.5" y2="189.8" stroke="#22cc22" stroke-width="1.3" opacity="1"/>
<line x1="325.4" y1="245.3" x2="426.0" y2="187.8" stroke="#e4f8e4" stroke-width="1.0" opacity="0.95"/>
<line x1="311.8" y1="256.3" x2="311.8" y2="262.3" stroke="#e05050" stroke-width="0.9" opacity="1"/>
<rect x="322.1" y="247.4" width="2" height="3" fill="#f02020"/>
<rect x="335.8" y="239.7" width="2" height="3" fill="#f02020"/>
<rect x="350.1" y="231.6" width="2" height="3" fill="#f02020"/>
<rect x="364.7" y="223.4" width="2" height="3" fill="#f02020"/>
<rect x="377.6" y="216.1" width="2" height="3" fill="#f02020"/>
<rect x="392.4" y="207.7" width="2" height="3" fill="#f02020"/>
<rect x="405.5" y="200.4" width="2" height="3" fill="#f02020"/>
<rect x="418.6" y="192.9" width="2" height="3" fill="#f02020"/>
<line x1="318.1" y1="260.8" x2="404.0" y2="212.4" stroke="#f0a8a8" stroke-width="0.9" opacity="0.9"/>
<line x1="334.4" y1="249.9" x2="403.0" y2="211.2" stroke="#22cc22" stroke-width="1.3" opacity="1"/>
<line x1="335.6" y1="247.6" x2="402.5" y2="209.2" stroke="#e4f8e4" stroke-width="1.0" opacity="0.95"/>
<line x1="318.1" y1="260.8" x2="318.1" y2="266.8" stroke="#e05050" stroke-width="0.9" opacity="1"/>
<rect x="324.6" y="254.1" width="2" height="3" fill="#f02020"/>
<rect x="335.8" y="247.8" width="2" height="3" fill="#f02020"/>
<rect x="346.1" y="242.0" width="2" height="3" fill="#f02020"/>
<rect x="357.6" y="235.5" width="2" height="3" fill="#f02020"/>
<rect x="368.0" y="229.6" width="2" height="3" fill="#f02020"/>
<rect x="376.9" y="224.6" width="2" height="3" fill="#f02020"/>
<rect x="388.6" y="218.0" width="2" height="3" fill="#f02020"/>
<rect x="398.6" y="212.4" width="2" height="3" fill="#f02020"/>
<line x1="324.4" y1="264.8" x2="333.9" y2="259.5" stroke="#f0a8a8" stroke-width="0.9" opacity="0.9"/>
<line x1="335.1" y1="257.1" x2="361.4" y2="242.3" stroke="#22cc22" stroke-width="1.3" opacity="1"/>
<line x1="336.3" y1="254.8" x2="360.9" y2="240.3" stroke="#e4f8e4" stroke-width="1.0" opacity="0.95"/>
<line x1="324.4" y1="264.8" x2="324.4" y2="270.8" stroke="#e05050" stroke-width="0.9" opacity="1"/>
<rect x="326.8" y="260.4" width="2" height="3" fill="#f02020"/>
<rect x="332.1" y="257.4" width="2" height="3" fill="#f02020"/>
<rect x="336.5" y="255.0" width="2" height="3" fill="#f02020"/>
<rect x="341.3" y="252.2" width="2" height="3" fill="#f02020"/>
<rect x="345.8" y="249.7" width="2" height="3" fill="#f02020"/>
<rect x="350.2" y="247.3" width="2" height="3" fill="#f02020"/>
<rect x="354.8" y="244.7" width="2" height="3" fill="#f02020"/>
<rect x="359.2" y="242.2" width="2" height="3" fill="#f02020"/>
<path d="M148 110 V152" stroke="#c8c8c8" stroke-width=".8"/>
<line x1="137.0" y1="158.0" x2="330.0" y2="276.0" stroke="#b0b0b0" stroke-width="0.8" opacity="1"/>
<line x1="166.5" y1="111.5" x2="362.6" y2="257.6" stroke="#b8b8b8" stroke-width="0.8" opacity="1"/>
<line x1="184.1" y1="81.1" x2="401.6" y2="232.6" stroke="#b8b8b8" stroke-width="0.8" opacity="1"/>
<path d="M115 106 L205 45" stroke="#20b0b0" stroke-width="1"/>
<path d="M118 112 L208 51" stroke="#b0b0b0" stroke-width=".8"/>
<path d="M140 125 L230 64" stroke="#b8b8b8" stroke-width=".8"/>
<path d="M115 106 Q111 138 127.5 150" stroke="#20b0b0" stroke-width="1" fill="none"/>
<path d="M127.5 150 L330 273.5" stroke="#20b0b0" stroke-width="1"/>
<path d="M205 45 L246 75 L340 140 L448 203" stroke="#c8c8c8" stroke-width="1" fill="none"/>
<path d="M448 203 L326 281" stroke="#20b0b0" stroke-width="1"/>
<path d="M440 200 L320 276" stroke="#c0c0c0" stroke-width=".8"/>
<path d="M448 203 Q452 222 435 229 Q425 229 418 222" stroke="#20b0b0" stroke-width="1" fill="none"/>
<path d="M448 203 L455 197" stroke="#c0c0c0" stroke-width=".8"/>
<path d="M212 76 L300 142" stroke="#20b0b0" stroke-width=".8" fill="none"/>
<rect x="239.1" y="69.7" width="2" height="2" fill="#20d0e0"/>
<rect x="261.5" y="85.4" width="2" height="2" fill="#20d0e0"/>
<rect x="284.1" y="101.0" width="2" height="2" fill="#20d0e0"/>
<rect x="306.6" y="116.6" width="2" height="2" fill="#20d0e0"/>
<rect x="329.2" y="132.2" width="2" height="2" fill="#20d0e0"/>
<rect x="352.3" y="146.8" width="2" height="2" fill="#20d0e0"/>
<rect x="376.0" y="160.6" width="2" height="2" fill="#20d0e0"/>
<rect x="399.7" y="174.4" width="2" height="2" fill="#20d0e0"/>
<rect x="423.3" y="188.2" width="2" height="2" fill="#20d0e0"/>
<rect x="447.0" y="202.0" width="2" height="2" fill="#20d0e0"/>
<rect x="126.5" y="149.0" width="2" height="2" fill="#20d0e0"/>
<rect x="149.0" y="162.7" width="2" height="2" fill="#20d0e0"/>
<rect x="171.5" y="176.4" width="2" height="2" fill="#20d0e0"/>
<rect x="194.0" y="190.2" width="2" height="2" fill="#20d0e0"/>
<rect x="216.5" y="203.9" width="2" height="2" fill="#20d0e0"/>
<rect x="239.0" y="217.6" width="2" height="2" fill="#20d0e0"/>
<rect x="261.5" y="231.3" width="2" height="2" fill="#20d0e0"/>
<rect x="284.0" y="245.1" width="2" height="2" fill="#20d0e0"/>
<rect x="306.5" y="258.8" width="2" height="2" fill="#20d0e0"/>
<rect x="329.0" y="272.5" width="2" height="2" fill="#20d0e0"/>
<g transform="rotate(32 134 111)"><ellipse cx="134" cy="111" rx="9" ry="5" fill="none" stroke="#f02020" stroke-width="1"/><path d="M125 111 h18 M134 106 v10" stroke="#f02020" stroke-width=".8"/></g>
<g transform="rotate(32 147 103)"><ellipse cx="147" cy="103" rx="9" ry="5" fill="none" stroke="#f02020" stroke-width="1"/><path d="M138 103 h18 M147 98 v10" stroke="#f02020" stroke-width=".8"/></g>
<g transform="rotate(32 160 95)"><ellipse cx="160" cy="95" rx="9" ry="5" fill="none" stroke="#f02020" stroke-width="1"/><path d="M151 95 h18 M160 90 v10" stroke="#f02020" stroke-width=".8"/></g>
<g transform="rotate(32 173 87)"><ellipse cx="173" cy="87" rx="9" ry="5" fill="none" stroke="#f02020" stroke-width="1"/><path d="M164 87 h18 M173 82 v10" stroke="#f02020" stroke-width=".8"/></g>
<g transform="rotate(32 186 80)"><ellipse cx="186" cy="80" rx="9" ry="5" fill="none" stroke="#f02020" stroke-width="1"/><path d="M177 80 h18 M186 75 v10" stroke="#f02020" stroke-width=".8"/></g>
<g transform="rotate(32 429 203)"><ellipse cx="429" cy="203" rx="9" ry="5.5" fill="none" stroke="#f02020" stroke-width="1"/><path d="M420 203 h18 M429 197.5 v11.0" stroke="#f02020" stroke-width=".8"/></g>
<g transform="rotate(32 416 210)"><ellipse cx="416" cy="210" rx="9" ry="5.5" fill="none" stroke="#f02020" stroke-width="1"/><path d="M407 210 h18 M416 204.5 v11.0" stroke="#f02020" stroke-width=".8"/></g>
<g transform="rotate(32 403 219)"><ellipse cx="403" cy="219" rx="9" ry="5.5" fill="none" stroke="#f02020" stroke-width="1"/><path d="M394 219 h18 M403 213.5 v11.0" stroke="#f02020" stroke-width=".8"/></g>
<g transform="rotate(32 390 228)"><ellipse cx="390" cy="228" rx="9" ry="5.5" fill="none" stroke="#f02020" stroke-width="1"/><path d="M381 228 h18 M390 222.5 v11.0" stroke="#f02020" stroke-width=".8"/></g>
<g transform="rotate(32 378 235)"><ellipse cx="378" cy="235" rx="9" ry="5.5" fill="none" stroke="#f02020" stroke-width="1"/><path d="M369 235 h18 M378 229.5 v11.0" stroke="#f02020" stroke-width=".8"/></g>
<g transform="rotate(32 365 244)"><ellipse cx="365" cy="244" rx="9" ry="5.5" fill="none" stroke="#f02020" stroke-width="1"/><path d="M356 244 h18 M365 238.5 v11.0" stroke="#f02020" stroke-width=".8"/></g>
<g transform="rotate(32 349 251.6)"><ellipse cx="349" cy="251.6" rx="9" ry="5.5" fill="none" stroke="#f02020" stroke-width="1"/><path d="M340 251.6 h18 M349 246.1 v11.0" stroke="#f02020" stroke-width=".8"/></g>
<ellipse cx="141" cy="128" rx="3.5" ry="7" transform="rotate(-15 141 128)" fill="none" stroke="#f02020" stroke-width="1"/>
<ellipse cx="165" cy="150" rx="3.5" ry="7" transform="rotate(-15 165 150)" fill="none" stroke="#f02020" stroke-width="1"/>
<ellipse cx="180" cy="158" rx="3.5" ry="7" transform="rotate(-15 180 158)" fill="none" stroke="#f02020" stroke-width="1"/>
<ellipse cx="230" cy="178" rx="3.5" ry="7" transform="rotate(-15 230 178)" fill="none" stroke="#f02020" stroke-width="1"/>
<ellipse cx="257" cy="188" rx="3.5" ry="7" transform="rotate(-15 257 188)" fill="none" stroke="#f02020" stroke-width="1"/>
<ellipse cx="288" cy="222" rx="3.5" ry="7" transform="rotate(-15 288 222)" fill="none" stroke="#f02020" stroke-width="1"/>
<ellipse cx="315" cy="240" rx="3.5" ry="7" transform="rotate(-15 315 240)" fill="none" stroke="#f02020" stroke-width="1"/>
<ellipse cx="262" cy="226" rx="3.5" ry="7" transform="rotate(-15 262 226)" fill="none" stroke="#f02020" stroke-width="1"/>
<path d="M232.0 216.0 v-33 l11 -6.5 v33 z" fill="none" stroke="#d8d8d8" stroke-width=".8"/>
<ellipse cx="237.5" cy="198.0" rx="3.2" ry="8" fill="none" stroke="#f03030" stroke-width="1.1"/>
<path d="M246.7 207.7 v-33 l11 -6.5 v33 z" fill="none" stroke="#d8d8d8" stroke-width=".8"/>
<ellipse cx="252.2" cy="189.7" rx="3.2" ry="8" fill="none" stroke="#f03030" stroke-width="1.1"/>
<path d="M261.4 199.4 v-33 l11 -6.5 v33 z" fill="none" stroke="#d8d8d8" stroke-width=".8"/>
<ellipse cx="266.9" cy="181.4" rx="3.2" ry="8" fill="none" stroke="#f03030" stroke-width="1.1"/>
<path d="M276.1 191.1 v-33 l11 -6.5 v33 z" fill="none" stroke="#d8d8d8" stroke-width=".8"/>
<ellipse cx="281.6" cy="173.1" rx="3.2" ry="8" fill="none" stroke="#f03030" stroke-width="1.1"/>
<path d="M290.8 182.8 v-33 l11 -6.5 v33 z" fill="none" stroke="#d8d8d8" stroke-width=".8"/>
<ellipse cx="296.3" cy="164.8" rx="3.2" ry="8" fill="none" stroke="#f03030" stroke-width="1.1"/>
<path d="M305.5 174.5 v-33 l11 -6.5 v33 z" fill="none" stroke="#d8d8d8" stroke-width=".8"/>
<ellipse cx="311.0" cy="156.5" rx="3.2" ry="8" fill="none" stroke="#f03030" stroke-width="1.1"/>
<path d="M320.2 166.2 v-33 l11 -6.5 v33 z" fill="none" stroke="#d8d8d8" stroke-width=".8"/>
<ellipse cx="325.7" cy="148.2" rx="3.2" ry="8" fill="none" stroke="#f03030" stroke-width="1.1"/>
<path d="M236 198 L330 146" stroke="#60ff60" stroke-width="2.5" opacity=".55"/>
<path d="M232 216 L320 166 M243 210 L331 160 M232 183 L320 133" stroke="#d0d0d0" stroke-width=".8"/>
</g></svg><!--WFEND-->
<div class="a" style="left:563px;top:75px;width:9px;height:525px;background:#f6f6f6"></div>
<div class="a" style="left:563px;top:132px;width:9px;height:13px;background:#d4d4d4"></div>
<svg class="a" style="left:563px;top:75px" width="110" height="200" viewBox="563 75 110 200">
<path d="M565.5 84 l2.5 -2.5 l2.5 2.5" stroke="#555" stroke-width="1" fill="none"/>
<rect x="572" y="75" width="15" height="200" fill="#f0f0f0"/>
<line x1="572.5" y1="75" x2="572.5" y2="275" stroke="#dcdcdc"/>
<path d="M575 77.5 h10 M575 80.5 h10" stroke="#a0a0a0"/>
<line x1="586.5" y1="75" x2="586.5" y2="275" stroke="#a8a8a8"/>
<!-- column icons -->
<path d="M577 95 L584 85" stroke="#e0c040" stroke-width="3"/><path d="M577 95 L580 91" stroke="#d04040" stroke-width="3"/><path d="M576 96 h8" stroke="#444"/>
<circle cx="578" cy="103" r="2.5" fill="none" stroke="#506080" stroke-width="1.3"/><circle cx="581" cy="108" r="2.5" fill="none" stroke="#506080" stroke-width="1.3"/><path d="M579 101 q4 -2 5 3" stroke="#2050a0" stroke-width="1.5" fill="none"/>
<path d="M576 126 L579.5 116 L579.5 126 Z M584 126 L580.5 116 L580.5 126 Z" fill="#d8d8d8" stroke="#404040" stroke-width=".8"/><line x1="580" y1="114" x2="580" y2="128" stroke="#5090e0"/>
<path d="M576 141 L580 132 L584 141 Z" fill="#80b0e8" stroke="#404860" stroke-width=".8"/>
<g fill="none" stroke="#404860" stroke-width=".9"><rect x="576" y="148" width="3.5" height="4"/><rect x="581" y="148" width="3.5" height="4"/><rect x="576" y="154" width="3.5" height="4"/><rect x="581" y="154" width="3.5" height="4"/></g>
<path d="M580 163 v12 M574.5 169 h11" stroke="#2060c0" stroke-width="1.5"/><path d="M578 165 l2 -2 l2 2 M578 173 l2 2 l2 -2" stroke="#2060c0" fill="none"/>
<path d="M583 180 a5 5 0 1 1 -6 0" stroke="#2060c0" stroke-width="1.5" fill="none"/>
<rect x="576" y="194" width="8" height="10" fill="none" stroke="#606870"/><rect x="576" y="199" width="4" height="5" fill="#c0d0e0" stroke="#606870" stroke-width=".6"/>
<path d="M576 220 L578 209 L582 209 L585 220 Z" fill="#e0e0e0" stroke="#505860" stroke-width=".9"/>
<path d="M575 229 h10 M580 223 l-2 12" stroke="#2060c0" stroke-width="1.2"/>
<path d="M575 245 h6 M584 238 l-3 10" stroke="#2060c0" stroke-width="1.2"/>
<rect x="576" y="258" width="9" height="8" fill="none" stroke="#505860"/>
</svg>
<div class="a" style="left:587px;top:75px;width:86px;height:200px;background:#f0f0f0"></div>
<div class="a" style="left:670px;top:75px;width:2px;height:200px;background:#e4e4e4"></div>
<div class="t" style="left:611px;top:77px;font-size:9px;color:#222;transform:scaleX(.85);transform-origin:0 0">沪东中华造船</div>
<div class="a" style="left:588px;top:86px;width:82px;height:1px;background:#c8c8c8"></div>
<div class="t" style="left:587px;top:88px;font-size:10px;color:#111;transform:scaleX(.66);transform-origin:0 0">工程</div>
<div class="t" style="left:587px;top:100px;font-size:10px;color:#111;transform:scaleX(.66);transform-origin:0 0">图册</div>
<div class="t" style="left:587px;top:113px;font-size:10px;color:#111;transform:scaleX(.66);transform-origin:0 0">图纸</div>
<div class="t" style="left:587px;top:126px;font-size:10px;color:#111;transform:scaleX(.66);transform-origin:0 0">模型</div>
<div class="a" style="left:601px;top:87px;width:70px;height:12px;background:#f4f4f4;border:1px solid #c4c4c4"></div>
<div class="a" style="left:601px;top:100px;width:70px;height:12px;background:#f4f4f4;border:1px solid #c4c4c4"></div>
<div class="a" style="left:601px;top:112px;width:70px;height:13px;background:#e8e8e8;border:1px solid #c4c4c4"></div>
<div class="a" style="left:601px;top:125px;width:70px;height:12px;background:#f4f4f4;border:1px solid #c4c4c4"></div>
<div class="t" style="left:603px;top:89px;font-size:9px;color:#222;font-family:'Liberation Mono',monospace;transform:scaleX(.65);transform-origin:0 0">D4-W8</div>
<div class="t" style="left:603px;top:101px;font-size:9px;color:#222;transform:scaleX(.8);transform-origin:0 0">船体 D4</div>
<div class="t" style="left:603px;top:114px;font-size:9px;color:#222;font-family:'Liberation Mono',monospace;transform:scaleX(.65);transform-origin:0 0">HdspdModel</div>
<div class="t" style="left:603px;top:127px;font-size:9px;color:#222;transform:scaleX(.8);transform-origin:0 0">船体 D4</div>
<svg class="a" style="left:663px;top:116px" width="8" height="6"><path d="M1 1.5 L4 4.5 L7 1.5" stroke="#666" stroke-width="1" fill="none"/></svg>
<svg class="a" style="left:587px;top:137px" width="86" height="80" viewBox="587 137 86 80">
<line x1="588" y1="138" x2="670" y2="138" stroke="#d0d0d0"/>
<!-- row1 -->
<path d="M590 141 h4 v11 h-4z" fill="#60e0f0"/><path d="M591 143 l3 2 l-3 2 l3 2" stroke="#f0e040" stroke-width="1.5" fill="none"/>
<rect x="601" y="141" width="7" height="11" fill="#6a6a20" stroke="#222" stroke-width=".8"/><rect x="603" y="142" width="3" height="3" fill="#fff"/><rect x="602" y="148" width="3" height="3" fill="#111"/>
<path d="M613 146 h9 v6 h-9z" fill="#e07080"/><path d="M614 146 v-4 M621 146 v-3" stroke="#333"/><rect x="614" y="147" width="7" height="2" fill="#fff"/>
<rect x="625" y="141" width="8" height="11" fill="#8a7020" stroke="#3a3010" stroke-width=".8"/><path d="M626 146 h6" stroke="#d04020"/>
<path d="M637 152 L637 141 L644 152 Z" fill="#8a8a20" stroke="#e03020" stroke-width="1"/>
<path d="M649 152 L652 143 L656 141 L656 150 Z" fill="#107010"/><path d="M649 152 h7" stroke="#8a8a10" stroke-width="2"/>
<path d="M661 150 L668 141" stroke="#c03030"/><rect x="661" y="146" width="3" height="3" fill="#f04040"/>
<!-- row2 -->
<path d="M591 157 v11" stroke="#f04040" stroke-width="2"/><path d="M593 160 h4 M593 163 h4 M593 166 h4" stroke="#30a040" stroke-width="2"/><rect x="596" y="160" width="2" height="6" fill="#4080e0"/>
<ellipse cx="605" cy="158" rx="4" ry="1.5" fill="#801010"/><rect x="601" y="158" width="8" height="10" fill="#c03020"/><rect x="601" y="158" width="2" height="10" fill="#808020"/>
<path d="M613 157 l8 11 M621 157 l-8 11 M613 162 h8" stroke="#111" stroke-width="1.4"/>
<path d="M625 158 h9 v3 h-9z" fill="#20b0c0"/><rect x="627" y="161" width="3" height="7" fill="#20b0c0"/><circle cx="632" cy="163" r="2" fill="#20d0e0"/>
<rect x="637" y="157" width="7" height="11" fill="#e8e8e8" stroke="#555" stroke-width=".8"/><path d="M638.5 160 h4 M638.5 163 h4" stroke="#555"/>
<rect x="648" y="159" width="9" height="7" fill="#ddd" stroke="#333" stroke-width=".9"/><rect x="650" y="157" width="5" height="3" fill="#fff" stroke="#333" stroke-width=".6"/>
<text x="660" y="162" font-size="4" fill="#333" font-family="Liberation Sans">1:3</text><text x="661" y="167" font-size="4" fill="#e03030" font-family="Liberation Sans">db</text>
<path d="M588 172 h82" stroke="#b8b8b8" stroke-dasharray="3 1.5"/>
<!-- row3 -->
<path d="M590 184 q1 -6 4 -6 l2 3 l4 -2 l1 5 z" fill="#6a6a10" stroke="#3a3a10" stroke-width=".6"/><rect x="590" y="184" width="10" height="2" fill="#a0a0a0"/>
<path d="M602 176 v10 h10 M604 178 l5 0 l2 5" stroke="#e03030" fill="none" stroke-width="1.2"/><path d="M604 177 l6 6" stroke="#333"/>
<rect x="613" y="176" width="9" height="10" fill="#c8c8c8"/><path d="M613 184 q5 -2 8 -8 M613 186 q6 -2 9 -7" stroke="#e03030" fill="none"/>
<rect x="625" y="176" width="8" height="10" fill="#c0c0c0"/><path d="M626 178 h6 M626 181 h6 M626 184 h6" stroke="#555" stroke-dasharray="1 1"/>
<path d="M638 177 l2 2 M642 176 l1 2 M639 183 l2 1 M643 184 l1 2" stroke="#999"/>
<rect x="648" y="176" width="9" height="10" fill="#d0d0d0"/><rect x="651" y="177" width="3" height="8" fill="#30c040"/><path d="M648 176 h9" stroke="#e04040"/><path d="M648 186 h9" stroke="#9050b0" stroke-width="1.5"/>
<rect x="661" y="176" width="9" height="10" fill="#fff" stroke="#2040a0" stroke-width="1.5"/><path d="M663 181 h5" stroke="#2040a0" stroke-width="1.5"/>
<!-- row4 -->
<rect x="590" y="191" width="9" height="11" fill="#4050a0"/><path d="M592 199 l5 -6" stroke="#f0d020" stroke-width="3"/><circle cx="593" cy="198" r="1.5" fill="#e03030"/>
<rect x="601" y="191" width="9" height="11" fill="#4050a0"/><rect x="603" y="194" width="5" height="5" fill="#30e080"/>
<rect x="612" y="190" width="10" height="12" fill="#d8d8d8"/><path d="M614 192 l6 9 M620 192 l-6 9" stroke="#111" stroke-width="1.5"/>
<line x1="588" y1="208.5" x2="670" y2="208.5" stroke="#c8c8c8"/>
</svg>
<!-- meeting panel -->
<svg class="a" style="left:672px;top:0" width="128" height="600" viewBox="672 0 128 600">
<defs>
<filter id="bl" x="-20%" y="-20%" width="140%" height="140%"><feGaussianBlur stdDeviation="1.2"/></filter>
<filter id="bl2" x="-20%" y="-20%" width="140%" height="140%"><feGaussianBlur stdDeviation="0.6"/></filter>
<clipPath id="v1"><rect x="715" y="65" width="40" height="98"/></clipPath>
<clipPath id="v2"><rect x="715" y="164" width="40" height="98"/></clipPath>
<clipPath id="v3"><rect x="715" y="263" width="40" height="97"/></clipPath>
<clipPath id="v4"><rect x="715" y="362" width="40" height="97"/></clipPath>
<clipPath id="v5"><rect x="715" y="461" width="40" height="97"/></clipPath>
</defs>
<rect x="672" y="0" width="128" height="600" fill="#34302c"/>
<rect x="672" y="0" width="1" height="600" fill="#9a9a9a"/>
<rect x="673" y="0" width="127" height="38" fill="#0a46c6"/>
<rect x="673" y="38" width="124" height="25" fill="#3b3d41"/>
<rect x="673" y="63" width="124" height="2" fill="#222"/>
<!-- file icons -->
<g id="wd">
<path d="M684.5 6 h12 l4.5 4.5 v26 h-16.5 z" fill="#fff"/>
<path d="M696.5 6 v4.5 h4.5 z" fill="#d8d8d8"/>
<rect x="683" y="10.5" width="10" height="14" rx="1" fill="#fff" stroke="#6a98f0" stroke-width="1.2"/>
<path d="M685 13.5 L686.3 21.5 L688 16.5 L689.7 21.5 L691 13.5" stroke="#3f7fe8" stroke-width="1.2" fill="none"/>
<path d="M687 27.5 h10 M687 30.5 h10 M687 33.5 h8" stroke="#d4d4d4" stroke-width="0.8"/>
</g>
<use href="#wd" x="39.5"/>
<path d="M763.5 6 h12 l4.5 4.5 v26 h-16.5 z" fill="#fff"/>
<path d="M775.5 6 v4.5 h4.5 z" fill="#d8d8d8"/>
<rect x="762" y="10" width="10" height="14" rx="1.5" fill="#e85050"/>
<path d="M765 21 v-6 q4 -1 4 2 q0 3 -4 2.5" stroke="#fff" stroke-width="1" fill="none"/>
<text x="765" y="33.5" font-size="6" fill="#c8c8c8" font-family="Liberation Sans">PDF</text>
<!-- speaking bar -->
<rect x="679" y="46" width="4" height="8" rx="2" fill="#6a6c70"/><path d="M678 52 q2.5 4 5 0 M680.5 56 v2" stroke="#6a6c70" fill="none"/>
<rect x="689" y="41" width="1" height="20" fill="#2e3034"/>
<text x="694" y="56" font-size="8" fill="#d8d8d8" font-family="Liberation Sans" transform="translate(694 0) scale(.9 1) translate(-694 0)">正在讲话:</text>
<path d="M760 43 l-7 8 l4 8 l7-8 z M769 43 l-7 8 l4 8 l7-8 z" fill="#55575b"/>
<path d="M764 51 l4 8 l7 -8 l-3.5 -6z" fill="#4a4c50"/>
<!-- tile separators -->
<rect x="673" y="163" width="124" height="1" fill="#1f1c1a"/>
<rect x="673" y="262" width="124" height="1" fill="#1f1c1a"/>
<rect x="673" y="360" width="124" height="2" fill="#1f1c1a"/>
<rect x="673" y="459" width="124" height="2" fill="#1f1c1a"/>
<rect x="673" y="558" width="124" height="1" fill="#1f1c1a"/>
<!-- video 1 -->
<g clip-path="url(#v1)">
<rect x="715" y="65" width="40" height="98" fill="#cfc6b8"/>
<g filter="url(#bl)">
<rect x="715" y="87" width="40" height="76" fill="#b0a49a"/>
<linearGradient id="hr1" x1="0" y1="0" x2="0" y2="1"><stop offset="0" stop-color="#9a8e86"/><stop offset=".35" stop-color="#5e4e46"/><stop offset="1" stop-color="#4a3a34"/></linearGradient>
<path d="M713 128 Q712 92 735 88 Q757 89 757 128 Z" fill="url(#hr1)"/>
<path d="M721 102 q4 10 2 22 M735 98 q3 12 0 26 M748 100 q-3 10 0 24" stroke="#8a7a70" stroke-width="2" fill="none" opacity=".5"/>
<rect x="715" y="122" width="40" height="18" fill="#b48a7e"/>
<path d="M715 148 L722 163 L715 163 Z M755 146 L750 163 L755 163Z" fill="#5a5a60"/>
</g>
<g filter="url(#bl2)">
<circle cx="727" cy="135" r="9" fill="#c4a49a" stroke="#111" stroke-width="2.4"/>
<circle cx="748" cy="134" r="8.5" fill="#c4a49a" stroke="#111" stroke-width="2.4"/>
<path d="M736 133 h3" stroke="#111" stroke-width="2"/>
<path d="M720 148 Q737 136 754 146 L753 163 L722 163 Z" fill="#ececee"/>
<path d="M737 141 v22" stroke="#c8c8cc" stroke-width=".8"/>
</g>
<rect x="717" y="73" width="36" height="14" fill="#3a3734" opacity=".92"/>
<path d="M732 81.5 l3 -3 l3 3" stroke="#eee" stroke-width="1.3" fill="none"/>
</g>
<!-- video 2 -->
<g clip-path="url(#v2)">
<g filter="url(#bl)">
<rect x="715" y="164" width="40" height="98" fill="#e4d8c4"/>
<rect x="715" y="230" width="40" height="32" fill="#cfc2b0"/>
<rect x="715" y="194" width="13" height="30" fill="#5a8a48"/>
<rect x="718" y="199" width="6" height="8" fill="#d8c840"/>
<rect x="716" y="211" width="6" height="7" fill="#5a80b0"/>
<path d="M715 226 L730 224 L730 262 L715 262 Z" fill="#2a2420"/>
<path d="M726 246 Q735 236 755 240 L755 262 L722 262 Z" fill="#2a2420"/>
<ellipse cx="741" cy="223" rx="13" ry="23" fill="#d2a898"/>
<path d="M728 212 Q726 186 742 185 Q757 186 756 212 Q750 200 742 201 Q733 202 728 212 Z" fill="#1e1816"/>
<path d="M735 245 L749 245 L749 262 L735 262 Z" fill="#eeecea"/>
</g>
</g>
<!-- video 3 -->
<g clip-path="url(#v3)">
<g filter="url(#bl)">
<rect x="715" y="263" width="40" height="97" fill="#dcdcdc"/>
<rect x="715" y="263" width="10" height="60" fill="#e8e8e8"/>
<rect x="715" y="318" width="12" height="10" fill="#c8c8c8"/>
<path d="M715 336 Q720 326 734 326 L755 328 L755 360 L715 360 Z" fill="#262626"/>
<path d="M727 308 Q727 288 741 288 Q754 289 753 310 Z" fill="#1a1a1c"/>
<ellipse cx="740" cy="315" rx="12" ry="13" fill="#c8a498"/>
<ellipse cx="740" cy="324" rx="9.5" ry="10" fill="#92c4e4"/>
</g>
<path d="M730 311 h20" stroke="#222" stroke-width="1.2" opacity=".7"/>
</g>
<!-- video 4 -->
<g clip-path="url(#v4)">
<g filter="url(#bl)">
<rect x="715" y="362" width="40" height="97" fill="#d6d8da"/>
<rect x="715" y="420" width="40" height="39" fill="#c8cacc"/>
<rect x="751" y="362" width="4" height="60" fill="#f0f0f0"/>
<path d="M737 448 Q740 436 748 436 L756 438 L756 459 L735 459 Z" fill="#1a1c20"/>
<ellipse cx="750" cy="428" rx="9" ry="13" fill="#c8a498"/>
<path d="M739 424 Q740 411 750 411 L757 412 L757 422 Q750 418 742 426 Z" fill="#161616"/>
<ellipse cx="751" cy="433" rx="7.5" ry="9" fill="#ececec"/>
<rect x="746" y="454" width="8" height="5" fill="#3a9a8a"/>
</g>
</g>
<!-- video 5 -->
<g clip-path="url(#v5)">
<g filter="url(#bl)">
<rect x="715" y="461" width="40" height="97" fill="#d8dadc"/>
<rect x="742" y="461" width="13" height="90" fill="#e8e8e8"/>
<path d="M748 470 v70" stroke="#c0c0c0" stroke-width="1.5"/>
<ellipse cx="722" cy="513" rx="9" ry="16" fill="#d4a898"/>
<path d="M712 506 Q713 489 723 489 Q732 490 731 505 Q724 498 715 506 Z" fill="#141416"/>
<path d="M713 528 Q722 522 732 526 Q748 534 754 548 L755 558 L713 558 Z" fill="#15171b"/>
</g>
<rect x="717" y="535" width="36" height="14" fill="#4a4846" opacity=".85"/>
<path d="M732 540 l3 3 l3 -3" stroke="#eee" stroke-width="1.3" fill="none"/>

</g>
<!-- name labels -->
<rect x="673" y="146" width="35" height="17" fill="#1c1a18" opacity=".9"/>
<rect x="673" y="245" width="35" height="17" fill="#1c1a18" opacity=".9"/>
<rect x="673" y="344" width="65" height="17" fill="#1c1a18" opacity=".9"/>
<rect x="673" y="442" width="64" height="17" fill="#1c1a18" opacity=".9"/>
<rect x="673" y="541" width="34" height="17" fill="#1c1a18" opacity=".9"/>
<g id="mic"><rect x="676" y="149" width="3.5" height="7" rx="1.7" fill="#e8e8e8"/><path d="M674.5 154 q3 4 6 0" stroke="#e8e8e8" fill="none" stroke-width=".8"/><path d="M674.5 160 l7 -11" stroke="#d83030" stroke-width="1.2"/></g>
<use href="#mic" y="99"/><use href="#mic" y="197"/><use href="#mic" y="296"/><use href="#mic" y="395"/>
<g font-family="Liberation Sans" fill="#f0f0f0" font-size="12">
<text x="682" y="159" transform="translate(682 0) scale(.8 1) translate(-682 0)">徐雨晨</text>
<text x="682" y="258" transform="translate(682 0) scale(.8 1) translate(-682 0)">孙王程</text>
<text x="682" y="357" transform="translate(682 0) scale(.74 1) translate(-682 0)">181111张瑞研</text>
<text x="682" y="455" transform="translate(682 0) scale(.74 1) translate(-682 0)">181111林志扬</text>
<text x="682" y="554" transform="translate(682 0) scale(.8 1) translate(-682 0)">马锦鸿</text>
</g>
<!-- bottom -->
<rect x="673" y="559" width="127" height="35" fill="#0a46c6"/>
<rect x="672" y="594" width="128" height="6" fill="#1c2438"/>
<text x="745" y="605" font-size="9" fill="#ddd" font-family="Liberation Sans">16:04</text>
<rect x="797" y="38" width="3" height="521" fill="#0a46c6"/>
</svg>
<!-- 3D window -->
<div class="a" style="left:666px;top:270px;width:6px;height:330px;background:#f2f2f2"></div>
<div class="a" style="left:668px;top:340px;width:3px;height:1px;background:#aaa"></div><div class="a" style="left:668px;top:428px;width:3px;height:1px;background:#aaa"></div><div class="a" style="left:668px;top:463px;width:3px;height:1px;background:#aaa"></div><div class="a" style="left:668px;top:510px;width:3px;height:1px;background:#aaa"></div>
<div class="a" style="left:67px;top:264px;width:600px;height:336px;background:#f0f0f0;border-radius:5px 5px 0 0;border:1px solid #9aa6b2;border-bottom:none"></div>
<div class="a" style="left:68px;top:283px;width:2px;height:317px;background:#e4edf6"></div>
<div class="a" style="left:664px;top:283px;width:2px;height:317px;background:#e4edf6"></div>
<div class="a" style="left:68px;top:265px;width:598px;height:18.5px;background:linear-gradient(#c0cedb,#d5e1ed);border-radius:4px 4px 0 0;border-top:1px solid #e6eef5"></div>
<div class="a" style="left:70px;top:283px;width:594px;height:14px;background:#fff"></div>
<div class="a" style="left:70px;top:316px;width:594px;height:284px;background:#000"></div>
<!-- 3D window chrome -->
<svg class="a" style="left:68px;top:265px" width="598" height="52" viewBox="68 265 598 52">
<path d="M71 270 l4 4 M72 276 l5 -3 M74 272 l3 8" stroke="#e02020" stroke-width="1"/><path d="M73 270 l6 3" stroke="#20d0e0" stroke-width="2"/><path d="M74 278 l3 3 l-3 0z" fill="#f0e020"/><path d="M72 274 l3 5" stroke="#8040c0" stroke-width="1.5"/>
<line x1="76.5" y1="300" x2="76.5" y2="314" stroke="#bcbcbc"/><line x1="116.5" y1="300" x2="116.5" y2="314" stroke="#bcbcbc"/><line x1="164.5" y1="300" x2="164.5" y2="314" stroke="#bcbcbc"/><line x1="240.5" y1="300" x2="240.5" y2="314" stroke="#bcbcbc"/>
<path d="M79 301 l6 7 l-2 4 l-4 -4z" fill="#e0a0a0"/><circle cx="85" cy="312" r="2" fill="#2a50a0"/><path d="M85 301 v4 M83 303 h4" stroke="#2a50a0"/>
<ellipse cx="95" cy="307" rx="3.5" ry="5" transform="rotate(30 95 307)" fill="#30a040"/><circle cx="98" cy="302" r="2" fill="#e0c030"/><path d="M91 312 q4 -2 8 -8" stroke="#3060c0" fill="none"/>
<circle cx="106" cy="305" r="3.5" fill="#f4f8fc" stroke="#506a90"/><line x1="108" y1="308" x2="111" y2="312" stroke="#c08030" stroke-width="1.5"/><path d="M110 301 v4 M108 303 h4" stroke="#2a50a0"/>
<rect x="118" y="302" width="9" height="7" fill="#fff" stroke="#e03030" stroke-width="1.3"/><path d="M119 306 h7" stroke="#555"/>
<path d="M130 312 l2 -8 h6" stroke="#333" stroke-width="1.2" fill="none"/><path d="M134 304 h4" stroke="#e03030" stroke-width="1.5"/>
<path d="M143 303 l6 7 M149 303 l-6 7" stroke="#111" stroke-width="1.6"/><circle cx="146" cy="306.5" r="3" fill="none" stroke="#e03030" opacity=".6"/>
<rect x="152" y="301" width="6" height="8" fill="#fff" stroke="#e03030" stroke-width="1.2"/><path d="M155 306 l4 5 M157 306 l2 3" stroke="#333"/>
<g stroke="#222" stroke-width="1" fill="#fff">
<path d="M171 304 h6 v8 h-6z M171 304 l2 -2 h6 l-2 2 M177 304 l2 -2 v8 l-2 2"/>
<path d="M183 304 h6 v8 h-6z M183 304 l2 -2 h6 l-2 2 M189 304 l2 -2 v8 l-2 2"/>
<path d="M195 304 h6 v8 h-6z M195 304 l2 -2 h6 l-2 2 M201 304 l2 -2 v8 l-2 2"/>
<path d="M206 304 h6 v8 h-6z M206 304 l2 -2 h6 l-2 2 M212 304 l2 -2 v8 l-2 2"/>
<path d="M218 304 h6 v8 h-6z M218 304 l2 -2 h6 l-2 2 M224 304 l2 -2 v8 l-2 2"/>
<path d="M230 304 h6 v8 h-6z M230 304 l2 -2 h6 l-2 2 M236 304 l2 -2 v8 l-2 2"/>
</g>
<path d="M173 302 h6 l-2 2 h-6z" fill="#e02020"/><path d="M183 308 h6 v4 h-6z" fill="#e02020"/><path d="M197 302 v8 l-2 2 v-8z" fill="#e02020"/>
<path d="M212 304 l2 -2 v8 l-2 2z" fill="#e02020"/><rect x="218" y="304" width="6" height="8" fill="#e02020"/><path d="M232 302 h6 v8 h-6z" fill="#a01010"/>
</svg>
<div class="t" style="left:81px;top:271px;font-size:10px;color:#9aa0a8;transform:scaleX(.8);transform-origin:0 0">三维窗口</div>
<div class="t" style="left:72px;top:286px;font-size:10px;color:#5a5a5a;transform:scaleX(.66);transform-origin:0 0">动态观察(D)</div>
<div class="t" style="left:113px;top:286px;font-size:10px;color:#5a5a5a;transform:scaleX(.66);transform-origin:0 0">视图(V)</div>
<div class="t" style="left:141px;top:286px;font-size:10px;color:#5a5a5a;transform:scaleX(.66);transform-origin:0 0">交互(I)</div>
<div class="t" style="left:167px;top:286px;font-size:10px;color:#5a5a5a;transform:scaleX(.66);transform-origin:0 0">设置(S)</div>
<div class="t" style="left:195px;top:286px;font-size:10px;color:#5a5a5a;transform:scaleX(.66);transform-origin:0 0">帮助(H)</div>
<div class="a" style="left:612px;top:268px;width:17px;height:13px;border:1px solid #b8c6d4;border-radius:2px;background:#d4dfea"></div>
<div class="a" style="left:630px;top:268px;width:17px;height:13px;border:1px solid #b8c6d4;border-radius:2px;background:#d4dfea"></div>
<div class="a" style="left:648px;top:268px;width:16px;height:13px;border:1px solid #b8c6d4;border-radius:2px;background:#d4dfea"></div>
<div class="a" style="left:617px;top:275px;width:6px;height:2px;background:#777;border-radius:1px"></div>
<div class="a" style="left:635px;top:271px;width:6px;height:6px;border:1px solid #777;border-radius:1px"></div>
<svg class="a" style="left:652px;top:270px" width="8" height="9"><path d="M1 1 L7 8 M7 1 L1 8" stroke="#7a7a7a" stroke-width="1.6"/></svg>
<div class="a" style="left:70px;top:297px;width:594px;height:1px;background:#c8c8c8"></div>
<!-- 3D content -->
<!--3DSTART--><svg class="a" style="left:70px;top:316px" width="594" height="284" viewBox="70 316 594 284">
<defs><linearGradient id="tg" x1="0" y1="0" x2="0" y2="1"><stop offset="0" stop-color="#137272"/><stop offset="1" stop-color="#0a5252"/></linearGradient><clipPath id="c3"><rect x="70" y="316.5" width="594" height="284"/></clipPath><filter id="b3"><feGaussianBlur stdDeviation="0.45"/></filter></defs>
<rect x="70" y="316" width="594" height="284" fill="#000"/>
<g filter="url(#b3)" clip-path="url(#c3)">
<linearGradient id="bg1" x1="0" y1="0" x2="0.3" y2="1"><stop offset="0" stop-color="#177878"/><stop offset="1" stop-color="#094a4a"/></linearGradient>
<path d="M192.5 370 L280 314 L333 318 L368 343 L478 418 L604 492 L609 489 L608 508 Q606 520 595 527.5 L487 595 Q480 601 476 599 L263 461 L231.7 442 Q216 431 206.7 421 Q197 408 194 390 Z" fill="#0a5050"/>
<path d="M192.5 370 L213 386 L220 398 L228 411.7 L240 421.7 L252 427 L263 461 L231.7 442 Q216 431 206.7 421 Q197 408 194 390 Z" fill="url(#bg1)"/>
<path d="M606 490 L609 489 L608 508 Q606 520 595 527.5 L487 595 L490 587 Q490 572 496 558 Z" fill="#0b5151"/>
<path d="M195 372.5 L280 316 L335 316 L370 341 L480 416 L606 490 L496 558 Q490 572 490 587 L471 577 L252 427 L240 421.7 L228 411.7 L220 398 L213 386 Z" fill="#3f3f3f"/>
<path d="M193 369.5 L280 315.5" stroke="#0f6a6a" stroke-width="2.6"/>
<rect x="221.0" y="360.7" width="22" height="10.6" rx="5.3" transform="rotate(27 232.0 366.0)" fill="#0e6464" />
<rect x="237.0" y="351.1" width="22" height="10.6" rx="5.3" transform="rotate(27 248.0 356.4)" fill="#0e6464" />
<rect x="253.0" y="340.7" width="22" height="10.6" rx="5.3" transform="rotate(27 264.0 346.0)" fill="#0e6464" />
<rect x="269.5" y="330.1" width="22" height="10.6" rx="5.3" transform="rotate(27 280.5 335.4)" fill="#0e6464" />
<rect x="285.0" y="319.7" width="22" height="10.6" rx="5.3" transform="rotate(27 296.0 325.0)" fill="#0e6464" />
<path d="M203 378 q4 -3 6 -1 l-2 9 z" fill="#0e6464"/>
<circle cx="318" cy="316" r="7" fill="#000"/>
<rect x="574.5" y="486.0" width="21.0" height="10" rx="5" transform="rotate(25 585.0 491.0)" fill="#000" />
<rect x="558.5" y="496.0" width="21.0" height="10" rx="5" transform="rotate(25 569.0 501.0)" fill="#000" />
<rect x="542.0" y="506.0" width="21.0" height="10" rx="5" transform="rotate(25 552.5 511.0)" fill="#7a1010" />
<path d="M548.5 515.0 l6 -9 l3 2 l-6 9 z" fill="#0b5a5a"/>
<rect x="525.5" y="516.0" width="21.0" height="10" rx="5" transform="rotate(25 536.0 521.0)" fill="#7a1010" />
<path d="M532.0 525.0 l6 -9 l3 2 l-6 9 z" fill="#0b5a5a"/>
<rect x="510.0" y="527.5" width="21.0" height="10" rx="5" transform="rotate(25 520.5 532.5)" fill="#7a1010" />
<path d="M516.5 536.5 l6 -9 l3 2 l-6 9 z" fill="#0b5a5a"/>
<rect x="492.1" y="537.0" width="21.0" height="10" rx="5" transform="rotate(25 502.6 542.0)" fill="#7a1010" />
<path d="M498.6 546.0 l6 -9 l3 2 l-6 9 z" fill="#0b5a5a"/>
<path d="M232.0 441.8 l17 -11 l0 -4.5 l-17 11 z" fill="#7a0e0e"/>
<path d="M242.0 448.3 l17 -11 l0 -4.5 l-17 11 z" fill="#7a0e0e"/>
<path d="M264.0 462.6 l17 -11 l0 -4.5 l-17 11 z" fill="#7a0e0e"/>
<path d="M285.0 476.2 l17 -11 l0 -4.5 l-17 11 z" fill="#7a0e0e"/>
<path d="M296.0 483.4 l17 -11 l0 -4.5 l-17 11 z" fill="#7a0e0e"/>
<path d="M306.5 490.2 l17 -11 l0 -4.5 l-17 11 z" fill="#7a0e0e"/>
<path d="M317.5 497.4 l17 -11 l0 -4.5 l-17 11 z" fill="#7a0e0e"/>
<path d="M328.0 504.2 l17 -11 l0 -4.5 l-17 11 z" fill="#7a0e0e"/>
<path d="M338.5 511.0 l17 -11 l0 -4.5 l-17 11 z" fill="#7a0e0e"/>
<path d="M349.0 517.9 l17 -11 l0 -4.5 l-17 11 z" fill="#7a0e0e"/>
<path d="M360.0 525.0 l17 -11 l0 -4.5 l-17 11 z" fill="#7a0e0e"/>
<path d="M371.0 532.1 l17 -11 l0 -4.5 l-17 11 z" fill="#7a0e0e"/>
<path d="M381.0 538.6 l17 -11 l0 -4.5 l-17 11 z" fill="#7a0e0e"/>
<path d="M405.0 554.2 l17 -11 l0 -4.5 l-17 11 z" fill="#7a0e0e"/>
<path d="M416.0 561.4 l17 -11 l0 -4.5 l-17 11 z" fill="#7a0e0e"/>
<path d="M427.0 568.5 l17 -11 l0 -4.5 l-17 11 z" fill="#7a0e0e"/>
<path d="M438.0 575.7 l17 -11 l0 -4.5 l-17 11 z" fill="#7a0e0e"/>
<path d="M452.0 584.8 l17 -11 l0 -4.5 l-17 11 z" fill="#7a0e0e"/>
<path d="M463.0 592.0 l17 -11 l0 -4.5 l-17 11 z" fill="#7a0e0e"/>
<path d="M228.0 403.0 l5 3 l-5 3 z" fill="#128a12"/>
<path d="M238.0 409.3 l5 3 l-5 3 z" fill="#128a12"/>
<path d="M248.0 415.6 l5 3 l-5 3 z" fill="#128a12"/>
<path d="M258.0 421.9 l5 3 l-5 3 z" fill="#128a12"/>
<path d="M268.0 428.2 l5 3 l-5 3 z" fill="#128a12"/>
<path d="M287.0 440.0 l5 3 l-5 3 z" fill="#128a12"/>
<path d="M297.0 447.4 l5 3 l-5 3 z" fill="#128a12"/>
<path d="M308.0 455.5 l5 3 l-5 3 z" fill="#128a12"/>
<path d="M319.0 463.7 l5 3 l-5 3 z" fill="#128a12"/>
<path d="M329.0 471.1 l5 3 l-5 3 z" fill="#128a12"/>
<path d="M340.0 479.2 l5 3 l-5 3 z" fill="#128a12"/>
<path d="M351.0 487.4 l5 3 l-5 3 z" fill="#128a12"/>
<path d="M362.0 495.5 l5 3 l-5 3 z" fill="#128a12"/>
<path d="M372.0 502.9 l5 3 l-5 3 z" fill="#128a12"/>
<path d="M383.0 511.0 l5 3 l-5 3 z" fill="#128a12"/>
<path d="M403.0 525.8 l5 3 l-5 3 z" fill="#128a12"/>
<path d="M424.0 541.4 l5 3 l-5 3 z" fill="#128a12"/>
<path d="M435.0 549.5 l5 3 l-5 3 z" fill="#128a12"/>
<path d="M456.0 565.1 l5 3 l-5 3 z" fill="#128a12"/>
<path d="M295.0 449.0 q8 2 9 9 l-4 1 q-4 -7 -5 -10z" fill="#0b5a5a"/>
<path d="M300.0 455.0 l5 3 l-1 3 q-5 0 -6 -5 z" fill="#7a0e0e"/>
<path d="M408.0 517.0 q8 2 9 9 l-4 1 q-4 -7 -5 -10z" fill="#0b5a5a"/>
<path d="M413.0 523.0 l5 3 l-1 3 q-5 0 -6 -5 z" fill="#7a0e0e"/>
<path d="M443.0 538.0 q8 2 9 9 l-4 1 q-4 -7 -5 -10z" fill="#0b5a5a"/>
<path d="M448.0 544.0 l5 3 l-1 3 q-5 0 -6 -5 z" fill="#7a0e0e"/>
<path d="M462.5 550.0 q8 2 9 9 l-4 1 q-4 -7 -5 -10z" fill="#0b5a5a"/>
<path d="M467.5 556.0 l5 3 l-1 3 q-5 0 -6 -5 z" fill="#7a0e0e"/>
<path d="M245.0 421.0 q8 2 9 9 l-4 1 q-4 -7 -5 -10z" fill="#0b5a5a"/>
<path d="M250.0 427.0 l5 3 l-1 3 q-5 0 -6 -5 z" fill="#7a0e0e"/>
<path d="M350 473 L352.5 474.5 L352.5 519 L350 517.5 Z" fill="#8a8a8a"/>
<path d="M356 482 L376 494 L376 522 L356 510 Z" fill="#5a5a5a" opacity=".8"/>
<path d="M360 497 L374 489 M360 508 L374 500" stroke="#128a12" stroke-width="2"/>
</g></svg><!--3DEND-->
<!-- command area -->
<div class="a" style="left:0;top:516px;width:68px;height:84px;background:#f0f0f0"></div>
<div class="a" style="left:0;top:516px;width:68px;height:10px;background:#fff"></div>
<div class="a" style="left:1px;top:517px;width:17px;height:9px;border:1px solid #888;border-top:none;background:#f4f4f4"></div>
<div class="a" style="left:19px;top:517px;width:21px;height:9px;border:1px solid #888;border-top:none;background:#f4f4f4"></div>
<div class="a" style="left:41px;top:517px;width:21px;height:9px;border:1px solid #888;border-top:none;background:#f4f4f4"></div>
<div class="t" style="left:3px;top:517px;font-size:8px;color:#444;transform:scaleX(.8);transform-origin:0 0">模型</div>
<div class="t" style="left:21px;top:517px;font-size:8px;color:#444;transform:scaleX(.8);transform-origin:0 0">布局1</div>
<div class="t" style="left:43px;top:517px;font-size:8px;color:#444;transform:scaleX(.8);transform-origin:0 0">布局2</div>
<div class="a" style="left:0;top:527px;width:68px;height:2px;background:#a8a8a8"></div>
<div class="a" style="left:0;top:535px;width:68px;height:26px;background:#fff;border-top:1px solid #b8b8b8"></div>
<div class="t" style="left:0;top:538px;font-size:9px;color:#333;font-family:'Liberation Mono',monospace;transform:scaleX(.85);transform-origin:0 0">指角点: •取消•</div>
<div class="t" style="left:0;top:548px;font-size:9px;color:#333;font-family:'Liberation Mono',monospace;transform:scaleX(.85);transform-origin:0 0">ACE</div>
<div class="a" style="left:0;top:561px;width:68px;height:14px;background:#fff;border-top:1px solid #b0b0b0"></div>
<div class="a" style="left:0;top:575px;width:68px;height:1px;background:#c0c0c0"></div>
<div class="t" style="left:0;top:580px;font-size:9px;color:#444;font-family:'Liberation Mono',monospace;transform:scaleX(.7);transform-origin:0 0">01E+06, 1000</div>
<div class="a" style="left:0;top:594px;width:68px;height:6px;background:#1f3b3c"></div>
<div class="a" style="left:67px;top:500px;width:1px;height:94px;background:#c8c8c8"></div>
<!-- chat overlay -->
<div class="a" style="left:7px;top:500px;width:68px;height:17px;background:rgba(18,18,18,.72)"></div>
<svg class="a" style="left:8px;top:502px" width="40" height="16">
<path d="M3 14 V4.5 q0 -1.5 1.5 -1.5 h6 q1.5 0 1.5 1.5 v2" stroke="#8a8a8a" stroke-width="1" fill="none"/>
<circle cx="10" cy="11" r="1.6" fill="#8a8a8a"/><path d="M7 16 q3 -4 6 0" fill="#8a8a8a"/>
<circle cx="24" cy="8.5" r="3.8" fill="#8c8c8c"/><circle cx="22.8" cy="7.5" r=".6" fill="#222"/><circle cx="25.2" cy="7.5" r=".6" fill="#222"/><path d="M22.3 9.5 q1.7 2 3.4 0z" fill="#222"/>
<line x1="32.5" y1="1" x2="32.5" y2="14" stroke="#444"/>
</svg>
<div class="t" style="left:46px;top:506px;font-size:8px;color:#c4c4c4;transform:scaleX(.85);transform-origin:0 0">说点什么...</div>
<!-- person -->
<svg class="a" style="left:30px;top:450px" width="145" height="150" viewBox="30 450 145 150">
<defs>
<filter id="pb" x="-10%" y="-10%" width="120%" height="120%"><feGaussianBlur stdDeviation="1.6"/></filter>
<filter id="pb2" x="-20%" y="-20%" width="140%" height="140%"><feGaussianBlur stdDeviation="0.9"/></filter>
<radialGradient id="skin" cx="0.5" cy="0.42" r="0.62"><stop offset="0" stop-color="#d2aca2"/><stop offset=".6" stop-color="#c0988e"/><stop offset="1" stop-color="#7a5a54"/></radialGradient>
<linearGradient id="jk" x1="0" y1="0" x2="1" y2="0.2"><stop offset="0" stop-color="#121418"/><stop offset=".25" stop-color="#22262c"/><stop offset=".45" stop-color="#0f1012"/><stop offset=".8" stop-color="#1e2124"/><stop offset="1" stop-color="#0c0c0e"/></linearGradient>
</defs>
<g filter="url(#pb)">
<path d="M35 595 Q40 570 55 556 Q70 545 88 540 L122 540 Q145 546 158 560 Q166 574 168 595 Z" fill="url(#jk)"/>
<path d="M95 556 L106 566 L118 556 L121 574 L114 595 L98 595 L91 574 Z" fill="#0f1220"/>
<path d="M46 584 Q56 564 78 553" stroke="#3c4456" stroke-width="3" fill="none" opacity=".4"/>
<path d="M132 556 Q152 566 160 588" stroke="#30363e" stroke-width="3" fill="none" opacity=".35"/>
<path d="M91 530 L92 558 Q106 566 121 556 L122 530 Z" fill="#9c7670"/>
<path d="M81 500 Q80 488 88 485 L124 485 Q130 490 129 505 L127 535 Q122 556 105 558 Q88 556 84 536 Z" fill="url(#skin)"/>
<ellipse cx="79" cy="515" rx="4" ry="9" fill="#a07c74"/>
<ellipse cx="130.5" cy="513" rx="3.5" ry="9" fill="#9a766e"/>
<path d="M73 520 Q70 480 82 466 Q100 454 120 460 Q136 470 133 500 L132 512 Q129 500 126 494 Q118 500 108 496 Q98 501 88 497 Q83 504 82 518 L77 526 Z" fill="#1b1919"/>
</g>
<g filter="url(#pb2)">
<ellipse cx="97.5" cy="510" rx="6.5" ry="4.5" fill="#a87470" opacity=".55"/>
<ellipse cx="117" cy="510" rx="6.5" ry="4.5" fill="#a87470" opacity=".55"/>
<ellipse cx="97.5" cy="509.5" rx="4" ry="2.4" fill="#1c1414"/>
<ellipse cx="117" cy="509.5" rx="4" ry="2.4" fill="#1c1414"/>
<ellipse cx="107.5" cy="527.5" rx="6.5" ry="3.5" fill="#a8706c" opacity=".8"/>
<ellipse cx="104" cy="528" rx="1.6" ry="1.2" fill="#3a2020"/>
<ellipse cx="111" cy="528" rx="1.6" ry="1.2" fill="#3a2020"/>
<path d="M107 512 v12" stroke="#d8b8b0" stroke-width="2" opacity=".6"/>
<path d="M98 540 q9.5 -3 19 0 q-9.5 4 -19 0z" fill="#a86a68"/>
<path d="M86 507 h21 M107 507 h23" stroke="#8a7a7a" stroke-width=".6" opacity=".6"/>
</g>
</svg>
<!-- green borders -->
<div class="a" style="left:0;top:0;width:50px;height:3px;background:#06d67a"></div>
<div class="a" style="left:0;top:0;width:3px;height:69px;background:#06d67a"></div>
<div class="a" style="left:750px;top:0;width:50px;height:3px;background:#06d67a"></div>
<div class="a" style="left:797px;top:0;width:3px;height:69px;background:#06d67a"></div>
<div class="a" style="left:797px;top:554px;width:3px;height:46px;background:#06d67a"></div>
<div class="a" style="left:0;top:554px;width:3px;height:46px;background:#06d67a"></div>
</body></html>
